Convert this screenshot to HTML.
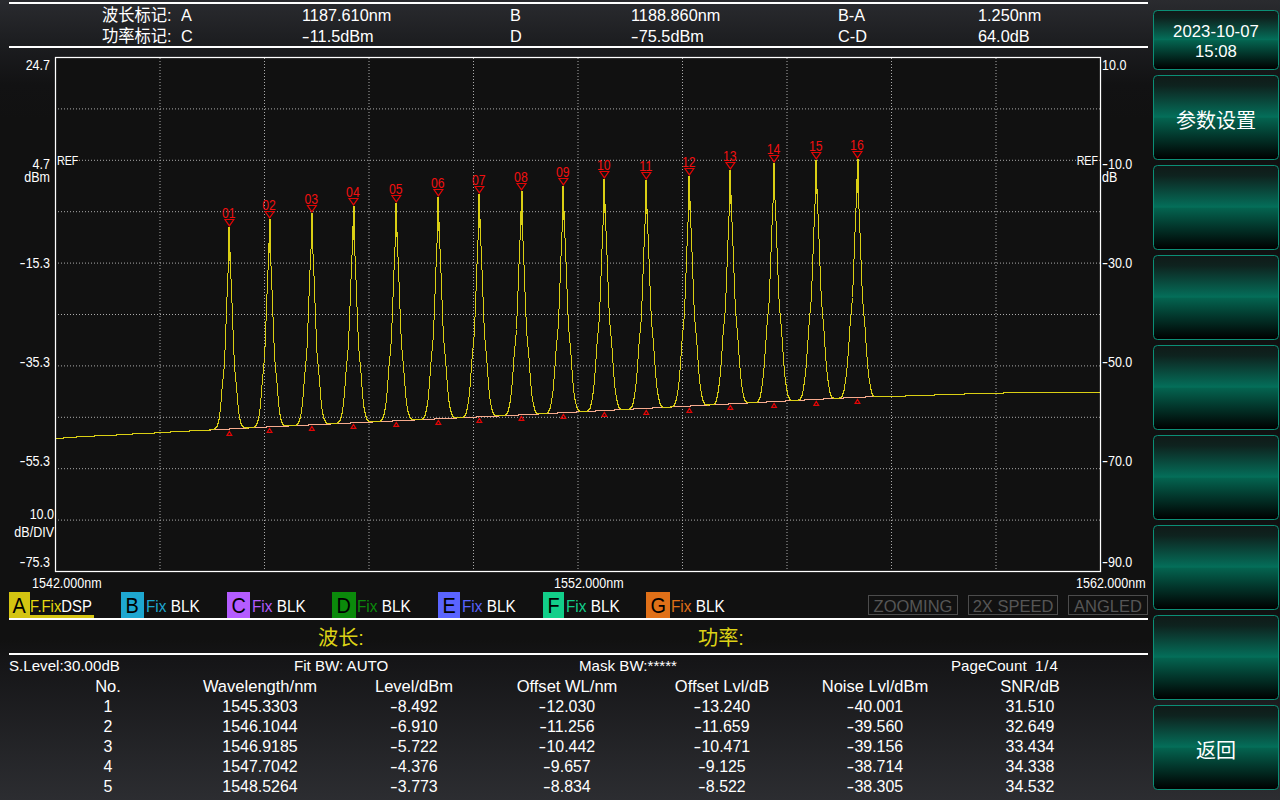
<!DOCTYPE html>
<html lang="zh"><head><meta charset="utf-8"><title>OSA</title>
<style>
*{margin:0;padding:0;box-sizing:border-box}
html,body{width:1280px;height:800px;overflow:hidden;background:#111}
body{position:relative;font-family:"Liberation Sans","Noto Sans CJK SC",sans-serif;color:#fff;font-size:16.8px;
 background:linear-gradient(180deg,#2a2b2f 0px,#1d1e21 40px,#121213 85px,#111111 120px,#111111 640px,#151517 660px,#2c2d31 800px)}
.m{display:inline-block;transform:scaleX(1.45);margin:0 1.2px}
.t{position:absolute;white-space:nowrap;line-height:20px;height:20px;transform:scaleX(.97);transform-origin:left center}
.hl{position:absolute;left:9px;width:1139px;height:2px;background:#fff}
.chart{position:absolute;left:0;top:0;font-family:"Liberation Sans",sans-serif}
.ax{position:absolute;white-space:nowrap;font-size:14.4px;line-height:14px;height:14px;transform:scaleX(.87);transform-origin:left center}
.ax .m{margin:0 1px}
.axl{width:50px;left:0;text-align:right;transform-origin:right center}
.axr{left:1102px}
.ref{font-size:12.4px;transform:scaleX(.86)}
/* side buttons */
.btn{position:absolute;left:1153px;width:126px;height:85px;border:1px solid #0b8f76;border-radius:4.5px;
 background:linear-gradient(180deg,#101a18 0%,#0e231f 12%,#046f5a 49.5%,#04634f 51%,#000 100%);
 display:flex;align-items:center;justify-content:center;text-align:center;font-size:20px;color:#fff;padding-top:3px}
.btn.first{top:10px;height:60px;font-size:17.2px;line-height:20px;padding-top:2px}
.btn.first span{display:block;transform:scaleX(.975)}
/* trace legend */
.bd{position:absolute;top:592px;height:26px;width:22px;color:#000;font-size:21.4px;line-height:28px;text-align:center;overflow:hidden}
.bd span{display:inline-block;transform:scaleX(.93)}
.lg{position:absolute;top:596px;height:20px;line-height:20px;font-size:16.5px;white-space:nowrap;transform:scaleX(.93);transform-origin:left center}
.lg b{font-weight:normal;color:#fff}
.st{position:absolute;top:595px;height:20px;border:1px solid #4c4c4c;color:#565656;font-size:16.5px;line-height:20px;text-align:center}
.s{font-size:14.4px;transform:scaleX(1.05)}
.hd{transform:translateX(-50%) scaleX(.985) !important}
.c{position:absolute;text-align:center;white-space:nowrap;height:20px;line-height:20px;transform:translateX(-50%) scaleX(.95)}
</style></head><body>
<div class="hl" style="top:2px"></div>
<div class="hl" style="top:46px"></div>
<div class="t" style="left:102px;top:6px">波长标记:</div>
<div class="t" style="left:181px;top:6px">A</div>
<div class="t" style="left:302px;top:6px">1187.610nm</div>
<div class="t" style="left:510px;top:6px">B</div>
<div class="t" style="left:631px;top:6px">1188.860nm</div>
<div class="t" style="left:838px;top:6px">B-A</div>
<div class="t" style="left:978px;top:6px">1.250nm</div>
<div class="t" style="left:102px;top:27px">功率标记:</div>
<div class="t" style="left:181px;top:27px">C</div>
<div class="t" style="left:302px;top:27px"><span class="m">-</span>11.5dBm</div>
<div class="t" style="left:510px;top:27px">D</div>
<div class="t" style="left:631px;top:27px"><span class="m">-</span>75.5dBm</div>
<div class="t" style="left:838px;top:27px">C-D</div>
<div class="t" style="left:978px;top:27px">64.0dB</div>
<!--CHART-->
<svg class="chart" width="1160" height="600" viewBox="0 0 1160 600">
<rect x="55" y="57" width="1046" height="515" fill="#111111"/>
<g stroke="#acacac" stroke-width="1" stroke-dasharray="1 2">
<line x1="160.00" y1="58" x2="160.00" y2="571"/>
<line x1="264.50" y1="58" x2="264.50" y2="571"/>
<line x1="369.00" y1="58" x2="369.00" y2="571"/>
<line x1="473.50" y1="58" x2="473.50" y2="571"/>
<line x1="578.00" y1="58" x2="578.00" y2="571"/>
<line x1="682.50" y1="58" x2="682.50" y2="571"/>
<line x1="787.00" y1="58" x2="787.00" y2="571"/>
<line x1="891.50" y1="58" x2="891.50" y2="571"/>
<line x1="996.00" y1="58" x2="996.00" y2="571"/>
<line x1="55" y1="108.90" x2="1100" y2="108.90"/>
<line x1="55" y1="160.30" x2="1100" y2="160.30"/>
<line x1="55" y1="211.70" x2="1100" y2="211.70"/>
<line x1="55" y1="263.10" x2="1100" y2="263.10"/>
<line x1="55" y1="314.50" x2="1100" y2="314.50"/>
<line x1="55" y1="365.90" x2="1100" y2="365.90"/>
<line x1="55" y1="417.30" x2="1100" y2="417.30"/>
<line x1="55" y1="468.70" x2="1100" y2="468.70"/>
<line x1="55" y1="520.10" x2="1100" y2="520.10"/>
</g>
<polyline fill="none" stroke="#f6ab8e" stroke-width="1" shape-rendering="crispEdges" points="210.0,430.5 210.5,429.5 211.0,429.5 211.5,429.5 212.0,429.5 212.5,429.5 213.0,429.5 213.5,429.5 214.0,429.5 214.5,429.5 215.0,429.5 215.5,429.5 216.0,429.5 216.5,429.5 217.0,429.5 217.5,429.5 218.0,429.5 218.5,429.5 219.0,429.5 219.5,429.5 220.0,429.5 220.5,429.5 221.0,429.5 221.5,429.5 222.0,429.5 222.5,429.5 223.0,429.5 223.5,429.5 224.0,429.5 224.5,429.5 225.0,429.5 225.5,429.5 226.0,429.5 226.5,429.5 227.0,429.5 227.5,429.5 228.0,429.5 228.5,429.5 229.0,429.5 229.5,429.5 230.0,428.5 230.5,428.5 231.0,428.5 231.5,428.5 232.0,428.5 232.5,428.5 233.0,428.5 233.5,428.5 234.0,428.5 234.5,428.5 235.0,428.5 235.5,428.5 236.0,428.5 236.5,428.5 237.0,428.5 237.5,428.5 238.0,428.5 238.5,428.5 239.0,428.5 239.5,428.5 240.0,428.5 240.5,428.5 241.0,428.5 241.5,428.5 242.0,428.5 242.5,428.5 243.0,428.5 243.5,428.5 244.0,428.5 244.5,428.5 245.0,428.5 245.5,428.5 246.0,428.5 246.5,428.5 247.0,428.5 247.5,428.5 248.0,428.5 248.5,427.5 249.0,427.5 249.5,427.5 250.0,427.5 250.5,427.5 251.0,427.5 251.5,427.5 252.0,427.5 252.5,427.5 253.0,427.5 253.5,427.5 254.0,427.5 254.5,427.5 255.0,427.5 255.5,427.5 256.0,427.5 256.5,427.5 257.0,427.5 257.5,427.5 258.0,427.5 258.5,427.5 259.0,427.5 259.5,427.5 260.0,427.5 260.5,427.5 261.0,427.5 261.5,427.5 262.0,427.5 262.5,427.5 263.0,427.5 263.5,427.5 264.0,427.5 264.5,427.5 265.0,427.5 265.5,427.5 266.0,427.5 266.5,427.5 267.0,426.5 267.5,426.5 268.0,426.5 268.5,426.5 269.0,426.5 269.5,426.5 270.0,426.5 270.5,426.5 271.0,426.5 271.5,426.5 272.0,426.5 272.5,426.5 273.0,426.5 273.5,426.5 274.0,426.5 274.5,426.5 275.0,426.5 275.5,426.5 276.0,426.5 276.5,426.5 277.0,426.5 277.5,426.5 278.0,426.5 278.5,426.5 279.0,426.5 279.5,426.5 280.0,426.5 280.5,426.5 281.0,426.5 281.5,426.5 282.0,426.5 282.5,426.5 283.0,426.5 283.5,426.5 284.0,426.5 284.5,426.5 285.0,426.5 285.5,426.5 286.0,426.5 286.5,426.5 287.0,426.5 287.5,426.5 288.0,426.5 288.5,425.5 289.0,425.5 289.5,425.5 290.0,425.5 290.5,425.5 291.0,425.5 291.5,425.5 292.0,425.5 292.5,425.5 293.0,425.5 293.5,425.5 294.0,425.5 294.5,425.5 295.0,425.5 295.5,425.5 296.0,425.5 296.5,425.5 297.0,425.5 297.5,425.5 298.0,425.5 298.5,425.5 299.0,425.5 299.5,425.5 300.0,425.5 300.5,425.5 301.0,425.5 301.5,425.5 302.0,425.5 302.5,425.5 303.0,425.5 303.5,425.5 304.0,425.5 304.5,425.5 305.0,425.5 305.5,425.5 306.0,425.5 306.5,425.5 307.0,425.5 307.5,425.5 308.0,425.5 308.5,425.5 309.0,424.5 309.5,424.5 310.0,424.5 310.5,424.5 311.0,424.5 311.5,424.5 312.0,424.5 312.5,424.5 313.0,424.5 313.5,424.5 314.0,424.5 314.5,424.5 315.0,424.5 315.5,424.5 316.0,424.5 316.5,424.5 317.0,424.5 317.5,424.5 318.0,424.5 318.5,424.5 319.0,424.5 319.5,424.5 320.0,424.5 320.5,424.5 321.0,424.5 321.5,424.5 322.0,424.5 322.5,424.5 323.0,424.5 323.5,424.5 324.0,424.5 324.5,424.5 325.0,424.5 325.5,424.5 326.0,424.5 326.5,424.5 327.0,424.5 327.5,424.5 328.0,424.5 328.5,424.5 329.0,424.5 329.5,424.5 330.0,424.5 330.5,423.5 331.0,423.5 331.5,423.5 332.0,423.5 332.5,423.5 333.0,423.5 333.5,423.5 334.0,423.5 334.5,423.5 335.0,423.5 335.5,423.5 336.0,423.5 336.5,423.5 337.0,423.5 337.5,423.5 338.0,423.5 338.5,423.5 339.0,423.5 339.5,423.5 340.0,423.5 340.5,423.5 341.0,423.5 341.5,423.5 342.0,423.5 342.5,423.5 343.0,423.5 343.5,423.5 344.0,423.5 344.5,423.5 345.0,423.5 345.5,423.5 346.0,423.5 346.5,423.5 347.0,423.5 347.5,423.5 348.0,423.5 348.5,423.5 349.0,423.5 349.5,423.5 350.0,423.5 350.5,423.5 351.0,422.5 351.5,422.5 352.0,422.5 352.5,422.5 353.0,422.5 353.5,422.5 354.0,422.5 354.5,422.5 355.0,422.5 355.5,422.5 356.0,422.5 356.5,422.5 357.0,422.5 357.5,422.5 358.0,422.5 358.5,422.5 359.0,422.5 359.5,422.5 360.0,422.5 360.5,422.5 361.0,422.5 361.5,422.5 362.0,422.5 362.5,422.5 363.0,422.5 363.5,422.5 364.0,422.5 364.5,422.5 365.0,422.5 365.5,422.5 366.0,422.5 366.5,422.5 367.0,422.5 367.5,422.5 368.0,422.5 368.5,422.5 369.0,422.5 369.5,422.5 370.0,422.5 370.5,422.5 371.0,422.5 371.5,422.5 372.0,422.5 372.5,421.5 373.0,421.5 373.5,421.5 374.0,421.5 374.5,421.5 375.0,421.5 375.5,421.5 376.0,421.5 376.5,421.5 377.0,421.5 377.5,421.5 378.0,421.5 378.5,421.5 379.0,421.5 379.5,421.5 380.0,421.5 380.5,421.5 381.0,421.5 381.5,421.5 382.0,421.5 382.5,421.5 383.0,421.5 383.5,421.5 384.0,421.5 384.5,421.5 385.0,421.5 385.5,421.5 386.0,421.5 386.5,421.5 387.0,421.5 387.5,421.5 388.0,421.5 388.5,421.5 389.0,421.5 389.5,421.5 390.0,421.5 390.5,421.5 391.0,421.5 391.5,421.5 392.0,421.5 392.5,421.5 393.0,420.5 393.5,420.5 394.0,420.5 394.5,420.5 395.0,420.5 395.5,420.5 396.0,420.5 396.5,420.5 397.0,420.5 397.5,420.5 398.0,420.5 398.5,420.5 399.0,420.5 399.5,420.5 400.0,420.5 400.5,420.5 401.0,420.5 401.5,420.5 402.0,420.5 402.5,420.5 403.0,420.5 403.5,420.5 404.0,420.5 404.5,420.5 405.0,420.5 405.5,420.5 406.0,420.5 406.5,420.5 407.0,420.5 407.5,420.5 408.0,420.5 408.5,420.5 409.0,420.5 409.5,420.5 410.0,420.5 410.5,420.5 411.0,420.5 411.5,420.5 412.0,420.5 412.5,420.5 413.0,420.5 413.5,420.5 414.0,420.5 414.5,419.5 415.0,419.5 415.5,419.5 416.0,419.5 416.5,419.5 417.0,419.5 417.5,419.5 418.0,419.5 418.5,419.5 419.0,419.5 419.5,419.5 420.0,419.5 420.5,419.5 421.0,419.5 421.5,419.5 422.0,419.5 422.5,419.5 423.0,419.5 423.5,419.5 424.0,419.5 424.5,419.5 425.0,419.5 425.5,419.5 426.0,419.5 426.5,419.5 427.0,419.5 427.5,419.5 428.0,419.5 428.5,419.5 429.0,419.5 429.5,419.5 430.0,419.5 430.5,419.5 431.0,419.5 431.5,419.5 432.0,419.5 432.5,419.5 433.0,419.5 433.5,419.5 434.0,419.5 434.5,419.5 435.0,418.5 435.5,418.5 436.0,418.5 436.5,418.5 437.0,418.5 437.5,418.5 438.0,418.5 438.5,418.5 439.0,418.5 439.5,418.5 440.0,418.5 440.5,418.5 441.0,418.5 441.5,418.5 442.0,418.5 442.5,418.5 443.0,418.5 443.5,418.5 444.0,418.5 444.5,418.5 445.0,418.5 445.5,418.5 446.0,418.5 446.5,418.5 447.0,418.5 447.5,418.5 448.0,418.5 448.5,418.5 449.0,418.5 449.5,418.5 450.0,418.5 450.5,418.5 451.0,418.5 451.5,418.5 452.0,418.5 452.5,418.5 453.0,418.5 453.5,418.5 454.0,418.5 454.5,418.5 455.0,418.5 455.5,418.5 456.0,418.5 456.5,417.5 457.0,417.5 457.5,417.5 458.0,417.5 458.5,417.5 459.0,417.5 459.5,417.5 460.0,417.5 460.5,417.5 461.0,417.5 461.5,417.5 462.0,417.5 462.5,417.5 463.0,417.5 463.5,417.5 464.0,417.5 464.5,417.5 465.0,417.5 465.5,417.5 466.0,417.5 466.5,417.5 467.0,417.5 467.5,417.5 468.0,417.5 468.5,417.5 469.0,417.5 469.5,417.5 470.0,417.5 470.5,417.5 471.0,417.5 471.5,417.5 472.0,417.5 472.5,417.5 473.0,417.5 473.5,417.5 474.0,417.5 474.5,417.5 475.0,417.5 475.5,417.5 476.0,417.5 476.5,417.5 477.0,416.5 477.5,416.5 478.0,416.5 478.5,416.5 479.0,416.5 479.5,416.5 480.0,416.5 480.5,416.5 481.0,416.5 481.5,416.5 482.0,416.5 482.5,416.5 483.0,416.5 483.5,416.5 484.0,416.5 484.5,416.5 485.0,416.5 485.5,416.5 486.0,416.5 486.5,416.5 487.0,416.5 487.5,416.5 488.0,416.5 488.5,416.5 489.0,416.5 489.5,416.5 490.0,416.5 490.5,416.5 491.0,416.5 491.5,416.5 492.0,416.5 492.5,416.5 493.0,416.5 493.5,416.5 494.0,416.5 494.5,416.5 495.0,416.5 495.5,416.5 496.0,416.5 496.5,416.5 497.0,416.5 497.5,416.5 498.0,416.5 498.5,415.5 499.0,415.5 499.5,415.5 500.0,415.5 500.5,415.5 501.0,415.5 501.5,415.5 502.0,415.5 502.5,415.5 503.0,415.5 503.5,415.5 504.0,415.5 504.5,415.5 505.0,415.5 505.5,415.5 506.0,415.5 506.5,415.5 507.0,415.5 507.5,415.5 508.0,415.5 508.5,415.5 509.0,415.5 509.5,415.5 510.0,415.5 510.5,415.5 511.0,415.5 511.5,415.5 512.0,415.5 512.5,415.5 513.0,415.5 513.5,415.5 514.0,415.5 514.5,415.5 515.0,415.5 515.5,415.5 516.0,415.5 516.5,415.5 517.0,415.5 517.5,415.5 518.0,415.5 518.5,415.5 519.0,414.5 519.5,414.5 520.0,414.5 520.5,414.5 521.0,414.5 521.5,414.5 522.0,414.5 522.5,414.5 523.0,414.5 523.5,414.5 524.0,414.5 524.5,414.5 525.0,414.5 525.5,414.5 526.0,414.5 526.5,414.5 527.0,414.5 527.5,414.5 528.0,414.5 528.5,414.5 529.0,414.5 529.5,414.5 530.0,414.5 530.5,414.5 531.0,414.5 531.5,414.5 532.0,414.5 532.5,414.5 533.0,414.5 533.5,414.5 534.0,414.5 534.5,414.5 535.0,414.5 535.5,414.5 536.0,414.5 536.5,414.5 537.0,414.5 537.5,414.5 538.0,414.5 538.5,413.5 539.0,413.5 539.5,413.5 540.0,413.5 540.5,413.5 541.0,413.5 541.5,413.5 542.0,413.5 542.5,413.5 543.0,413.5 543.5,413.5 544.0,413.5 544.5,413.5 545.0,413.5 545.5,413.5 546.0,413.5 546.5,413.5 547.0,413.5 547.5,413.5 548.0,413.5 548.5,413.5 549.0,413.5 549.5,413.5 550.0,413.5 550.5,413.5 551.0,413.5 551.5,413.5 552.0,413.5 552.5,413.5 553.0,413.5 553.5,413.5 554.0,413.5 554.5,413.5 555.0,413.5 555.5,413.5 556.0,413.5 556.5,413.5 557.0,413.5 557.5,413.5 558.0,412.5 558.5,412.5 559.0,412.5 559.5,412.5 560.0,412.5 560.5,412.5 561.0,412.5 561.5,412.5 562.0,412.5 562.5,412.5 563.0,412.5 563.5,412.5 564.0,412.5 564.5,412.5 565.0,412.5 565.5,412.5 566.0,412.5 566.5,412.5 567.0,412.5 567.5,412.5 568.0,412.5 568.5,412.5 569.0,412.5 569.5,412.5 570.0,412.5 570.5,412.5 571.0,412.5 571.5,412.5 572.0,412.5 572.5,412.5 573.0,412.5 573.5,412.5 574.0,412.5 574.5,412.5 575.0,412.5 575.5,412.5 576.0,412.5 576.5,411.5 577.0,411.5 577.5,411.5 578.0,411.5 578.5,411.5 579.0,411.5 579.5,411.5 580.0,411.5 580.5,411.5 581.0,411.5 581.5,411.5 582.0,411.5 582.5,411.5 583.0,411.5 583.5,411.5 584.0,411.5 584.5,411.5 585.0,411.5 585.5,411.5 586.0,411.5 586.5,411.5 587.0,411.5 587.5,411.5 588.0,411.5 588.5,411.5 589.0,411.5 589.5,411.5 590.0,411.5 590.5,411.5 591.0,411.5 591.5,411.5 592.0,411.5 592.5,411.5 593.0,411.5 593.5,411.5 594.0,411.5 594.5,411.5 595.0,411.5 595.5,410.5 596.0,410.5 596.5,410.5 597.0,410.5 597.5,410.5 598.0,410.5 598.5,410.5 599.0,410.5 599.5,410.5 600.0,410.5 600.5,410.5 601.0,410.5 601.5,410.5 602.0,410.5 602.5,410.5 603.0,410.5 603.5,410.5 604.0,410.5 604.5,410.5 605.0,410.5 605.5,410.5 606.0,410.5 606.5,410.5 607.0,410.5 607.5,410.5 608.0,410.5 608.5,410.5 609.0,410.5 609.5,410.5 610.0,410.5 610.5,410.5 611.0,410.5 611.5,410.5 612.0,410.5 612.5,410.5 613.0,410.5 613.5,410.5 614.0,410.5 614.5,409.5 615.0,409.5 615.5,409.5 616.0,409.5 616.5,409.5 617.0,409.5 617.5,409.5 618.0,409.5 618.5,409.5 619.0,409.5 619.5,409.5 620.0,409.5 620.5,409.5 621.0,409.5 621.5,409.5 622.0,409.5 622.5,409.5 623.0,409.5 623.5,409.5 624.0,409.5 624.5,409.5 625.0,409.5 625.5,409.5 626.0,409.5 626.5,409.5 627.0,409.5 627.5,409.5 628.0,409.5 628.5,409.5 629.0,409.5 629.5,409.5 630.0,409.5 630.5,409.5 631.0,409.5 631.5,409.5 632.0,409.5 632.5,409.5 633.0,409.5 633.5,408.5 634.0,408.5 634.5,408.5 635.0,408.5 635.5,408.5 636.0,408.5 636.5,408.5 637.0,408.5 637.5,408.5 638.0,408.5 638.5,408.5 639.0,408.5 639.5,408.5 640.0,408.5 640.5,408.5 641.0,408.5 641.5,408.5 642.0,408.5 642.5,408.5 643.0,408.5 643.5,408.5 644.0,408.5 644.5,408.5 645.0,408.5 645.5,408.5 646.0,408.5 646.5,408.5 647.0,408.5 647.5,408.5 648.0,408.5 648.5,408.5 649.0,408.5 649.5,408.5 650.0,408.5 650.5,408.5 651.0,408.5 651.5,408.5 652.0,408.5 652.5,407.5 653.0,407.5 653.5,407.5 654.0,407.5 654.5,407.5 655.0,407.5 655.5,407.5 656.0,407.5 656.5,407.5 657.0,407.5 657.5,407.5 658.0,407.5 658.5,407.5 659.0,407.5 659.5,407.5 660.0,407.5 660.5,407.5 661.0,407.5 661.5,407.5 662.0,407.5 662.5,407.5 663.0,407.5 663.5,407.5 664.0,407.5 664.5,407.5 665.0,407.5 665.5,407.5 666.0,407.5 666.5,407.5 667.0,407.5 667.5,407.5 668.0,407.5 668.5,407.5 669.0,407.5 669.5,407.5 670.0,407.5 670.5,407.5 671.0,407.5 671.5,406.5 672.0,406.5 672.5,406.5 673.0,406.5 673.5,406.5 674.0,406.5 674.5,406.5 675.0,406.5 675.5,406.5 676.0,406.5 676.5,406.5 677.0,406.5 677.5,406.5 678.0,406.5 678.5,406.5 679.0,406.5 679.5,406.5 680.0,406.5 680.5,406.5 681.0,406.5 681.5,406.5 682.0,406.5 682.5,406.5 683.0,406.5 683.5,406.5 684.0,406.5 684.5,406.5 685.0,406.5 685.5,406.5 686.0,406.5 686.5,406.5 687.0,406.5 687.5,406.5 688.0,406.5 688.5,406.5 689.0,406.5 689.5,406.5 690.0,406.5 690.5,405.5 691.0,405.5 691.5,405.5 692.0,405.5 692.5,405.5 693.0,405.5 693.5,405.5 694.0,405.5 694.5,405.5 695.0,405.5 695.5,405.5 696.0,405.5 696.5,405.5 697.0,405.5 697.5,405.5 698.0,405.5 698.5,405.5 699.0,405.5 699.5,405.5 700.0,405.5 700.5,405.5 701.0,405.5 701.5,405.5 702.0,405.5 702.5,405.5 703.0,405.5 703.5,405.5 704.0,405.5 704.5,405.5 705.0,405.5 705.5,405.5 706.0,405.5 706.5,405.5 707.0,405.5 707.5,405.5 708.0,405.5 708.5,405.5 709.0,405.5 709.5,404.5 710.0,404.5 710.5,404.5 711.0,404.5 711.5,404.5 712.0,404.5 712.5,404.5 713.0,404.5 713.5,404.5 714.0,404.5 714.5,404.5 715.0,404.5 715.5,404.5 716.0,404.5 716.5,404.5 717.0,404.5 717.5,404.5 718.0,404.5 718.5,404.5 719.0,404.5 719.5,404.5 720.0,404.5 720.5,404.5 721.0,404.5 721.5,404.5 722.0,404.5 722.5,404.5 723.0,404.5 723.5,404.5 724.0,404.5 724.5,404.5 725.0,404.5 725.5,404.5 726.0,404.5 726.5,404.5 727.0,404.5 727.5,404.5 728.0,404.5 728.5,404.5 729.0,403.5 729.5,403.5 730.0,403.5 730.5,403.5 731.0,403.5 731.5,403.5 732.0,403.5 732.5,403.5 733.0,403.5 733.5,403.5 734.0,403.5 734.5,403.5 735.0,403.5 735.5,403.5 736.0,403.5 736.5,403.5 737.0,403.5 737.5,403.5 738.0,403.5 738.5,403.5 739.0,403.5 739.5,403.5 740.0,403.5 740.5,403.5 741.0,403.5 741.5,403.5 742.0,403.5 742.5,403.5 743.0,403.5 743.5,403.5 744.0,403.5 744.5,403.5 745.0,403.5 745.5,403.5 746.0,403.5 746.5,403.5 747.0,403.5 747.5,403.5 748.0,402.5 748.5,402.5 749.0,402.5 749.5,402.5 750.0,402.5 750.5,402.5 751.0,402.5 751.5,402.5 752.0,402.5 752.5,402.5 753.0,402.5 753.5,402.5 754.0,402.5 754.5,402.5 755.0,402.5 755.5,402.5 756.0,402.5 756.5,402.5 757.0,402.5 757.5,402.5 758.0,402.5 758.5,402.5 759.0,402.5 759.5,402.5 760.0,402.5 760.5,402.5 761.0,402.5 761.5,402.5 762.0,402.5 762.5,402.5 763.0,402.5 763.5,402.5 764.0,402.5 764.5,402.5 765.0,402.5 765.5,402.5 766.0,402.5 766.5,402.5 767.0,401.5 767.5,401.5 768.0,401.5 768.5,401.5 769.0,401.5 769.5,401.5 770.0,401.5 770.5,401.5 771.0,401.5 771.5,401.5 772.0,401.5 772.5,401.5 773.0,401.5 773.5,401.5 774.0,401.5 774.5,401.5 775.0,401.5 775.5,401.5 776.0,401.5 776.5,401.5 777.0,401.5 777.5,401.5 778.0,401.5 778.5,401.5 779.0,401.5 779.5,401.5 780.0,401.5 780.5,401.5 781.0,401.5 781.5,401.5 782.0,401.5 782.5,401.5 783.0,401.5 783.5,401.5 784.0,401.5 784.5,401.5 785.0,401.5 785.5,401.5 786.0,400.5 786.5,400.5 787.0,400.5 787.5,400.5 788.0,400.5 788.5,400.5 789.0,400.5 789.5,400.5 790.0,400.5 790.5,400.5 791.0,400.5 791.5,400.5 792.0,400.5 792.5,400.5 793.0,400.5 793.5,400.5 794.0,400.5 794.5,400.5 795.0,400.5 795.5,400.5 796.0,400.5 796.5,400.5 797.0,400.5 797.5,400.5 798.0,400.5 798.5,400.5 799.0,400.5 799.5,400.5 800.0,400.5 800.5,400.5 801.0,400.5 801.5,400.5 802.0,400.5 802.5,400.5 803.0,400.5 803.5,400.5 804.0,400.5 804.5,400.5 805.0,399.5 805.5,399.5 806.0,399.5 806.5,399.5 807.0,399.5 807.5,399.5 808.0,399.5 808.5,399.5 809.0,399.5 809.5,399.5 810.0,399.5 810.5,399.5 811.0,399.5 811.5,399.5 812.0,399.5 812.5,399.5 813.0,399.5 813.5,399.5 814.0,399.5 814.5,399.5 815.0,399.5 815.5,399.5 816.0,399.5 816.5,399.5 817.0,399.5 817.5,399.5 818.0,399.5 818.5,399.5 819.0,399.5 819.5,399.5 820.0,399.5 820.5,399.5 821.0,399.5 821.5,399.5 822.0,399.5 822.5,399.5 823.0,399.5 823.5,399.5 824.0,398.5 824.5,398.5 825.0,398.5 825.5,398.5 826.0,398.5 826.5,398.5 827.0,398.5 827.5,398.5 828.0,398.5 828.5,398.5 829.0,398.5 829.5,398.5 830.0,398.5 830.5,398.5 831.0,398.5 831.5,398.5 832.0,398.5 832.5,398.5 833.0,398.5 833.5,398.5 834.0,398.5 834.5,398.5 835.0,398.5 835.5,398.5 836.0,398.5 836.5,398.5 837.0,398.5 837.5,398.5 838.0,398.5 838.5,398.5 839.0,398.5 839.5,398.5 840.0,398.5 840.5,398.5 841.0,398.5 841.5,398.5 842.0,398.5 842.5,398.5 843.0,398.5 843.5,397.5 844.0,397.5 844.5,397.5 845.0,397.5 845.5,397.5 846.0,397.5 846.5,397.5 847.0,397.5 847.5,397.5 848.0,397.5 848.5,397.5 849.0,397.5 849.5,397.5 850.0,397.5 850.5,397.5 851.0,397.5 851.5,397.5 852.0,397.5 852.5,397.5 853.0,397.5 853.5,397.5 854.0,397.5 854.5,397.5 855.0,397.5 855.5,397.5 856.0,397.5 856.5,397.5 857.0,397.5 857.5,397.5 858.0,397.5 858.5,397.5 859.0,397.5 859.5,397.5 860.0,397.5 860.5,397.5 861.0,397.5 861.5,397.5 862.0,397.5 862.5,397.5 863.0,397.5 863.5,397.5 864.0,397.5 864.5,397.5 865.0,397.5 865.5,397.5 866.0,396.5 866.5,396.5 867.0,396.5 867.5,396.5 868.0,396.5 868.5,396.5 869.0,396.5 869.5,396.5 870.0,396.5 870.5,396.5 871.0,396.5 871.5,396.5 872.0,396.5 872.5,396.5 873.0,396.5 873.5,396.5 874.0,396.5 874.5,396.5 875.0,396.5 875.5,396.5 876.0,396.5"/>
<polyline fill="none" stroke="#dacf14" stroke-width="1" stroke-linejoin="round" shape-rendering="crispEdges" points="55.00,438.5 55.25,438.5 55.50,438.5 55.75,438.5 56.00,438.5 56.25,438.5 56.50,438.5 56.75,438.5 57.00,438.5 57.25,438.5 57.50,438.5 57.75,438.5 58.00,438.5 58.25,438.5 58.50,438.5 58.75,438.5 59.00,438.5 59.25,438.5 59.50,438.5 59.75,438.5 60.00,438.5 60.25,438.5 60.50,438.5 60.75,438.5 61.00,438.5 61.25,438.5 61.50,438.5 61.75,438.5 62.00,438.5 62.25,438.5 62.50,438.5 62.75,438.5 63.00,438.5 63.25,437.5 63.50,437.5 63.75,437.5 64.00,437.5 64.25,437.5 64.50,437.5 64.75,437.5 65.00,437.5 65.25,437.5 65.50,437.5 65.75,437.5 66.00,437.5 66.25,437.5 66.50,437.5 66.75,437.5 67.00,437.5 67.25,437.5 67.50,437.5 67.75,437.5 68.00,437.5 68.25,437.5 68.50,437.5 68.75,437.5 69.00,437.5 69.25,437.5 69.50,437.5 69.75,437.5 70.00,437.5 70.25,437.5 70.50,437.5 70.75,437.5 71.00,437.5 71.25,437.5 71.50,437.5 71.75,437.5 72.00,437.5 72.25,437.5 72.50,437.5 72.75,437.5 73.00,437.5 73.25,437.5 73.50,437.5 73.75,437.5 74.00,437.5 74.25,437.5 74.50,437.5 74.75,437.5 75.00,437.5 75.25,437.5 75.50,437.5 75.75,437.5 76.00,437.5 76.25,437.5 76.50,437.5 76.75,437.5 77.00,436.5 77.25,436.5 77.50,436.5 77.75,436.5 78.00,436.5 78.25,436.5 78.50,436.5 78.75,436.5 79.00,436.5 79.25,436.5 79.50,436.5 79.75,436.5 80.00,436.5 80.25,436.5 80.50,436.5 80.75,436.5 81.00,436.5 81.25,436.5 81.50,436.5 81.75,436.5 82.00,436.5 82.25,436.5 82.50,436.5 82.75,436.5 83.00,436.5 83.25,436.5 83.50,436.5 83.75,436.5 84.00,436.5 84.25,436.5 84.50,436.5 84.75,436.5 85.00,436.5 85.25,436.5 85.50,436.5 85.75,436.5 86.00,436.5 86.25,436.5 86.50,436.5 86.75,436.5 87.00,436.5 87.25,436.5 87.50,436.5 87.75,436.5 88.00,436.5 88.25,436.5 88.50,436.5 88.75,436.5 89.00,436.5 89.25,436.5 89.50,436.5 89.75,436.5 90.00,436.5 90.25,436.5 90.50,436.5 90.75,436.5 91.00,436.5 91.25,436.5 91.50,436.5 91.75,436.5 92.00,436.5 92.25,436.5 92.50,436.5 92.75,436.5 93.00,436.5 93.25,436.5 93.50,436.5 93.75,436.5 94.00,436.5 94.25,436.5 94.50,436.5 94.75,436.5 95.00,435.5 95.25,435.5 95.50,435.5 95.75,435.5 96.00,435.5 96.25,435.5 96.50,435.5 96.75,435.5 97.00,435.5 97.25,435.5 97.50,435.5 97.75,435.5 98.00,435.5 98.25,435.5 98.50,435.5 98.75,435.5 99.00,435.5 99.25,435.5 99.50,435.5 99.75,435.5 100.00,435.5 100.25,435.5 100.50,435.5 100.75,435.5 101.00,435.5 101.25,435.5 101.50,435.5 101.75,435.5 102.00,435.5 102.25,435.5 102.50,435.5 102.75,435.5 103.00,435.5 103.25,435.5 103.50,435.5 103.75,435.5 104.00,435.5 104.25,435.5 104.50,435.5 104.75,435.5 105.00,435.5 105.25,435.5 105.50,435.5 105.75,435.5 106.00,435.5 106.25,435.5 106.50,435.5 106.75,435.5 107.00,435.5 107.25,435.5 107.50,435.5 107.75,435.5 108.00,435.5 108.25,435.5 108.50,435.5 108.75,435.5 109.00,435.5 109.25,435.5 109.50,435.5 109.75,435.5 110.00,435.5 110.25,435.5 110.50,435.5 110.75,435.5 111.00,435.5 111.25,435.5 111.50,435.5 111.75,435.5 112.00,435.5 112.25,435.5 112.50,435.5 112.75,435.5 113.00,435.5 113.25,435.5 113.50,435.5 113.75,435.5 114.00,435.5 114.25,435.5 114.50,435.5 114.75,435.5 115.00,435.5 115.25,435.5 115.50,435.5 115.75,435.5 116.00,435.5 116.25,435.5 116.50,435.5 116.75,435.5 117.00,434.5 117.25,434.5 117.50,434.5 117.75,434.5 118.00,434.5 118.25,434.5 118.50,434.5 118.75,434.5 119.00,434.5 119.25,434.5 119.50,434.5 119.75,434.5 120.00,434.5 120.25,434.5 120.50,434.5 120.75,434.5 121.00,434.5 121.25,434.5 121.50,434.5 121.75,434.5 122.00,434.5 122.25,434.5 122.50,434.5 122.75,434.5 123.00,434.5 123.25,434.5 123.50,434.5 123.75,434.5 124.00,434.5 124.25,434.5 124.50,434.5 124.75,434.5 125.00,434.5 125.25,434.5 125.50,434.5 125.75,434.5 126.00,434.5 126.25,434.5 126.50,434.5 126.75,434.5 127.00,434.5 127.25,434.5 127.50,434.5 127.75,434.5 128.00,434.5 128.25,434.5 128.50,434.5 128.75,434.5 129.00,434.5 129.25,434.5 129.50,434.5 129.75,434.5 130.00,434.5 130.25,434.5 130.50,434.5 130.75,434.5 131.00,434.5 131.25,434.5 131.50,434.5 131.75,434.5 132.00,434.5 132.25,433.5 132.50,433.5 132.75,433.5 133.00,433.5 133.25,433.5 133.50,433.5 133.75,433.5 134.00,433.5 134.25,433.5 134.50,433.5 134.75,433.5 135.00,433.5 135.25,433.5 135.50,433.5 135.75,433.5 136.00,433.5 136.25,433.5 136.50,433.5 136.75,433.5 137.00,433.5 137.25,433.5 137.50,433.5 137.75,433.5 138.00,433.5 138.25,433.5 138.50,433.5 138.75,433.5 139.00,433.5 139.25,433.5 139.50,433.5 139.75,433.5 140.00,433.5 140.25,433.5 140.50,433.5 140.75,433.5 141.00,433.5 141.25,433.5 141.50,433.5 141.75,433.5 142.00,433.5 142.25,433.5 142.50,433.5 142.75,433.5 143.00,433.5 143.25,433.5 143.50,433.5 143.75,433.5 144.00,433.5 144.25,433.5 144.50,433.5 144.75,433.5 145.00,433.5 145.25,433.5 145.50,433.5 145.75,433.5 146.00,433.5 146.25,433.5 146.50,433.5 146.75,433.5 147.00,433.5 147.25,433.5 147.50,433.5 147.75,433.5 148.00,433.5 148.25,433.5 148.50,433.5 148.75,433.5 149.00,433.5 149.25,433.5 149.50,433.5 149.75,433.5 150.00,433.5 150.25,433.5 150.50,433.5 150.75,433.5 151.00,433.5 151.25,433.5 151.50,433.5 151.75,433.5 152.00,433.5 152.25,433.5 152.50,433.5 152.75,433.5 153.00,433.5 153.25,433.5 153.50,433.5 153.75,433.5 154.00,433.5 154.25,433.5 154.50,433.5 154.75,433.5 155.00,432.5 155.25,432.5 155.50,432.5 155.75,432.5 156.00,432.5 156.25,432.5 156.50,432.5 156.75,432.5 157.00,432.5 157.25,432.5 157.50,432.5 157.75,432.5 158.00,432.5 158.25,432.5 158.50,432.5 158.75,432.5 159.00,432.5 159.25,432.5 159.50,432.5 159.75,432.5 160.00,432.5 160.25,432.5 160.50,432.5 160.75,432.5 161.00,432.5 161.25,432.5 161.50,432.5 161.75,432.5 162.00,432.5 162.25,432.5 162.50,432.5 162.75,432.5 163.00,432.5 163.25,432.5 163.50,432.5 163.75,432.5 164.00,432.5 164.25,432.5 164.50,432.5 164.75,432.5 165.00,432.5 165.25,432.5 165.50,432.5 165.75,432.5 166.00,432.5 166.25,432.5 166.50,432.5 166.75,432.5 167.00,432.5 167.25,432.5 167.50,432.5 167.75,432.5 168.00,432.5 168.25,432.5 168.50,432.5 168.75,432.5 169.00,432.5 169.25,432.5 169.50,432.5 169.75,432.5 170.00,432.5 170.25,431.5 170.50,431.5 170.75,431.5 171.00,431.5 171.25,431.5 171.50,431.5 171.75,431.5 172.00,431.5 172.25,431.5 172.50,431.5 172.75,431.5 173.00,431.5 173.25,431.5 173.50,431.5 173.75,431.5 174.00,431.5 174.25,431.5 174.50,431.5 174.75,431.5 175.00,431.5 175.25,431.5 175.50,431.5 175.75,431.5 176.00,431.5 176.25,431.5 176.50,431.5 176.75,431.5 177.00,431.5 177.25,431.5 177.50,431.5 177.75,431.5 178.00,431.5 178.25,431.5 178.50,431.5 178.75,431.5 179.00,431.5 179.25,431.5 179.50,431.5 179.75,431.5 180.00,431.5 180.25,431.5 180.50,431.5 180.75,431.5 181.00,431.5 181.25,431.5 181.50,431.5 181.75,431.5 182.00,431.5 182.25,431.5 182.50,431.5 182.75,431.5 183.00,431.5 183.25,431.5 183.50,431.5 183.75,431.5 184.00,431.5 184.25,431.5 184.50,431.5 184.75,431.5 185.00,431.5 185.25,431.5 185.50,431.5 185.75,431.5 186.00,431.5 186.25,431.5 186.50,431.5 186.75,431.5 187.00,431.5 187.25,431.5 187.50,431.5 187.75,431.5 188.00,431.5 188.25,431.5 188.50,431.5 188.75,431.5 189.00,431.5 189.25,431.5 189.50,431.5 189.75,431.5 190.00,430.5 190.25,430.5 190.50,430.5 190.75,430.5 191.00,430.5 191.25,430.5 191.50,430.5 191.75,430.5 192.00,430.5 192.25,430.5 192.50,430.5 192.75,430.5 193.00,430.5 193.25,430.5 193.50,430.5 193.75,430.5 194.00,430.5 194.25,430.5 194.50,430.5 194.75,430.5 195.00,430.5 195.25,430.5 195.50,430.5 195.75,430.5 196.00,430.5 196.25,430.5 196.50,430.5 196.75,430.5 197.00,430.5 197.25,430.5 197.50,430.5 197.75,430.5 198.00,430.5 198.25,430.5 198.50,430.5 198.75,430.5 199.00,430.5 199.25,430.5 199.50,430.5 199.75,430.5 200.00,430.5 200.25,430.5 200.50,430.5 200.75,430.5 201.00,430.5 201.25,430.5 201.50,430.5 201.75,430.5 202.00,430.5 202.25,430.5 202.50,430.5 202.75,430.5 203.00,430.5 203.25,430.5 203.50,430.5 203.75,430.5 204.00,430.5 204.25,430.5 204.50,430.5 204.75,430.5 205.00,430.5 205.25,430.5 205.50,430.5 205.75,430.5 206.00,430.5 206.25,430.5 206.50,430.5 206.75,430.5 207.00,430.5 207.25,430.5 207.50,430.5 207.75,430.5 208.00,430.5 208.25,430.5 208.50,430.5 208.75,430.5 209.00,430.5 209.25,430.5 209.50,430.5 209.75,430.5 210.00,429.5 210.25,429.5 210.50,429.5 210.75,429.5 211.00,429.5 211.25,429.5 211.50,429.5 211.75,429.5 212.00,429.5 212.25,429.5 212.50,429.5 212.75,429.5 213.00,429.5 213.25,429.5 213.50,429.5 213.75,429.5 214.00,429.5 214.25,429.5 214.50,429.5 214.75,428.5 215.00,428.5 215.25,428.5 215.50,428.5 215.75,428.5 216.00,427.5 216.25,427.5 216.50,427.5 216.75,426.5 217.00,426.5 217.25,425.5 217.50,424.5 217.75,424.5 218.00,423.5 218.25,422.5 218.50,421.5 218.75,420.5 219.00,419.5 219.25,418.5 219.50,416.5 219.75,414.5 220.00,412.5 220.25,410.5 220.50,407.5 220.75,405.5 221.00,402.5 221.25,399.5 221.50,396.5 221.75,393.5 222.00,389.5 222.25,387.5 222.50,384.5 222.75,382.5 223.00,379.5 223.25,377.5 223.50,374.5 223.75,371.5 224.00,369.5 224.25,366.5 224.50,361.5 224.75,356.5 225.00,350.5 225.25,344.5 225.50,337.5 225.75,331.5 226.00,324.5 226.25,317.5 226.50,310.5 226.75,304.5 227.00,297.5 227.25,290.5 227.50,284.5 227.75,279.5 228.00,273.5 228.25,268.5 228.50,263.5 228.75,253.5 229.00,243.5 229.25,233.5 229.40,227.5 229.50,231.5 229.75,241.5 230.00,251.5 230.25,261.5 230.50,267.5 230.75,272.5 231.00,278.5 231.25,283.5 231.50,289.5 231.75,296.5 232.00,302.5 232.25,309.5 232.50,316.5 232.75,323.5 233.00,329.5 233.25,336.5 233.50,342.5 233.75,348.5 234.00,354.5 234.25,360.5 234.50,365.5 234.75,368.5 235.00,371.5 235.25,374.5 235.50,376.5 235.75,379.5 236.00,381.5 236.25,384.5 236.50,386.5 236.75,389.5 237.00,392.5 237.25,395.5 237.50,398.5 237.75,401.5 238.00,404.5 238.25,407.5 238.50,409.5 238.75,411.5 239.00,413.5 239.25,415.5 239.50,417.5 239.75,418.5 240.00,419.5 240.25,420.5 240.50,421.5 240.75,422.5 241.00,423.5 241.25,423.5 241.50,424.5 241.75,424.5 242.00,425.5 242.25,425.5 242.50,426.5 242.75,426.5 243.00,426.5 243.25,427.5 243.50,427.5 243.75,427.5 244.00,427.5 244.25,427.5 244.50,427.5 244.75,427.5 245.00,427.5 245.25,427.5 245.50,427.5 245.75,427.5 246.00,427.5 246.25,428.5 246.50,428.5 246.75,428.5 247.00,428.5 247.25,428.5 247.50,427.5 247.75,427.5 248.00,427.5 248.25,427.5 248.50,427.5 248.75,427.5 249.00,427.5 249.25,427.5 249.50,427.5 249.75,427.5 250.00,427.5 250.25,427.5 250.50,427.5 250.75,427.5 251.00,427.5 251.25,427.5 251.50,427.5 251.75,427.5 252.00,427.5 252.25,427.5 252.50,427.5 252.75,427.5 253.00,427.5 253.25,427.5 253.50,427.5 253.75,427.5 254.00,427.5 254.25,427.5 254.50,426.5 254.75,426.5 255.00,426.5 255.25,426.5 255.50,426.5 255.75,425.5 256.00,425.5 256.25,425.5 256.50,424.5 256.75,424.5 257.00,423.5 257.25,422.5 257.50,422.5 257.75,421.5 258.00,420.5 258.25,419.5 258.50,418.5 258.75,417.5 259.00,416.5 259.25,414.5 259.50,413.5 259.75,411.5 260.00,409.5 260.25,406.5 260.50,404.5 260.75,401.5 261.00,398.5 261.25,395.5 261.50,392.5 261.75,388.5 262.00,385.5 262.25,382.5 262.50,379.5 262.75,377.5 263.00,374.5 263.25,371.5 263.50,369.5 263.75,366.5 264.00,363.5 264.25,361.5 264.50,358.5 264.75,353.5 265.00,347.5 265.25,340.5 265.50,334.5 265.75,328.5 266.00,321.5 266.25,315.5 266.50,308.5 266.75,301.5 267.00,294.5 267.25,288.5 267.50,281.5 267.75,275.5 268.00,270.5 268.25,264.5 268.50,259.5 268.75,253.5 269.00,243.5 269.25,233.5 269.50,223.5 269.60,219.5 269.75,225.5 270.00,235.5 270.25,245.5 270.50,255.5 270.75,260.5 271.00,265.5 271.25,271.5 271.50,276.5 271.75,282.5 272.00,289.5 272.25,296.5 272.50,302.5 272.75,309.5 273.00,316.5 273.25,323.5 273.50,329.5 273.75,336.5 274.00,342.5 274.25,348.5 274.50,354.5 274.75,358.5 275.00,361.5 275.25,364.5 275.50,367.5 275.75,369.5 276.00,372.5 276.25,375.5 276.50,377.5 276.75,380.5 277.00,382.5 277.25,386.5 277.50,389.5 277.75,392.5 278.00,395.5 278.25,398.5 278.50,401.5 278.75,404.5 279.00,406.5 279.25,409.5 279.50,411.5 279.75,413.5 280.00,414.5 280.25,415.5 280.50,417.5 280.75,418.5 281.00,419.5 281.25,419.5 281.50,420.5 281.75,421.5 282.00,422.5 282.25,422.5 282.50,423.5 282.75,423.5 283.00,424.5 283.25,424.5 283.50,424.5 283.75,424.5 284.00,425.5 284.25,425.5 284.50,425.5 284.75,425.5 285.00,425.5 285.25,425.5 285.50,425.5 285.75,425.5 286.00,425.5 286.25,425.5 286.50,425.5 286.75,425.5 287.00,425.5 287.25,425.5 287.50,425.5 287.75,425.5 288.00,425.5 288.25,425.5 288.50,425.5 288.75,425.5 289.00,425.5 289.25,425.5 289.50,425.5 289.75,425.5 290.00,425.5 290.25,425.5 290.50,425.5 290.75,425.5 291.00,425.5 291.25,425.5 291.50,425.5 291.75,425.5 292.00,425.5 292.25,425.5 292.50,425.5 292.75,425.5 293.00,425.5 293.25,425.5 293.50,425.5 293.75,425.5 294.00,425.5 294.25,425.5 294.50,425.5 294.75,425.5 295.00,425.5 295.25,425.5 295.50,425.5 295.75,425.5 296.00,425.5 296.25,425.5 296.50,424.5 296.75,424.5 297.00,424.5 297.25,424.5 297.50,424.5 297.75,423.5 298.00,423.5 298.25,423.5 298.50,422.5 298.75,422.5 299.00,421.5 299.25,420.5 299.50,420.5 299.75,419.5 300.00,418.5 300.25,417.5 300.50,416.5 300.75,415.5 301.00,414.5 301.25,412.5 301.50,411.5 301.75,409.5 302.00,407.5 302.25,405.5 302.50,402.5 302.75,399.5 303.00,397.5 303.25,394.5 303.50,390.5 303.75,387.5 304.00,384.5 304.25,380.5 304.50,377.5 304.75,374.5 305.00,372.5 305.25,369.5 305.50,366.5 305.75,364.5 306.00,361.5 306.25,358.5 306.50,355.5 306.75,353.5 307.00,348.5 307.25,342.5 307.50,336.5 307.75,330.5 308.00,323.5 308.25,317.5 308.50,310.5 308.75,303.5 309.00,296.5 309.25,290.5 309.50,283.5 309.75,276.5 310.00,270.5 310.25,265.5 310.50,259.5 310.75,254.5 311.00,249.5 311.25,239.5 311.50,229.5 311.75,219.5 311.90,213.5 312.00,217.5 312.25,227.5 312.50,237.5 312.75,247.5 313.00,253.5 313.25,258.5 313.50,264.5 313.75,269.5 314.00,275.5 314.25,282.5 314.50,288.5 314.75,295.5 315.00,302.5 315.25,309.5 315.50,315.5 315.75,322.5 316.00,328.5 316.25,335.5 316.50,341.5 316.75,347.5 317.00,352.5 317.25,355.5 317.50,358.5 317.75,360.5 318.00,363.5 318.25,366.5 318.50,368.5 318.75,371.5 319.00,374.5 319.25,376.5 319.50,380.5 319.75,383.5 320.00,386.5 320.25,390.5 320.50,393.5 320.75,396.5 321.00,399.5 321.25,401.5 321.50,404.5 321.75,406.5 322.00,408.5 322.25,410.5 322.50,411.5 322.75,413.5 323.00,414.5 323.25,415.5 323.50,416.5 323.75,417.5 324.00,418.5 324.25,419.5 324.50,419.5 324.75,420.5 325.00,420.5 325.25,421.5 325.50,421.5 325.75,422.5 326.00,422.5 326.25,422.5 326.50,423.5 326.75,423.5 327.00,423.5 327.25,423.5 327.50,423.5 327.75,423.5 328.00,423.5 328.25,423.5 328.50,423.5 328.75,423.5 329.00,423.5 329.25,423.5 329.50,423.5 329.75,423.5 330.00,423.5 330.25,423.5 330.50,423.5 330.75,423.5 331.00,423.5 331.25,423.5 331.50,423.5 331.75,423.5 332.00,423.5 332.25,423.5 332.50,423.5 332.75,423.5 333.00,423.5 333.25,423.5 333.50,423.5 333.75,423.5 334.00,423.5 334.25,423.5 334.50,423.5 334.75,423.5 335.00,423.5 335.25,423.5 335.50,423.5 335.75,423.5 336.00,423.5 336.25,423.5 336.50,423.5 336.75,423.5 337.00,423.5 337.25,423.5 337.50,423.5 337.75,423.5 338.00,422.5 338.25,422.5 338.50,422.5 338.75,422.5 339.00,421.5 339.25,421.5 339.50,421.5 339.75,420.5 340.00,420.5 340.25,419.5 340.50,419.5 340.75,418.5 341.00,417.5 341.25,416.5 341.50,415.5 341.75,414.5 342.00,413.5 342.25,412.5 342.50,410.5 342.75,409.5 343.00,407.5 343.25,405.5 343.50,403.5 343.75,401.5 344.00,398.5 344.25,395.5 344.50,392.5 344.75,389.5 345.00,386.5 345.25,382.5 345.50,379.5 345.75,375.5 346.00,372.5 346.25,369.5 346.50,366.5 346.75,363.5 347.00,361.5 347.25,358.5 347.50,355.5 347.75,352.5 348.00,350.5 348.25,347.5 348.50,343.5 348.75,337.5 349.00,331.5 349.25,325.5 349.50,319.5 349.75,312.5 350.00,306.5 350.25,299.5 350.50,292.5 350.75,285.5 351.00,279.5 351.25,272.5 351.50,265.5 351.75,260.5 352.00,255.5 352.25,249.5 352.50,244.5 352.75,236.5 353.00,226.5 353.25,216.5 353.50,206.5 353.50,206.5 353.75,216.5 354.00,226.5 354.25,236.5 354.50,244.5 354.75,249.5 355.00,255.5 355.25,260.5 355.50,265.5 355.75,272.5 356.00,279.5 356.25,285.5 356.50,292.5 356.75,299.5 357.00,306.5 357.25,312.5 357.50,319.5 357.75,325.5 358.00,331.5 358.25,337.5 358.50,343.5 358.75,347.5 359.00,350.5 359.25,352.5 359.50,355.5 359.75,358.5 360.00,361.5 360.25,363.5 360.50,366.5 360.75,369.5 361.00,372.5 361.25,375.5 361.50,379.5 361.75,382.5 362.00,386.5 362.25,389.5 362.50,392.5 362.75,395.5 363.00,398.5 363.25,400.5 363.50,403.5 363.75,405.5 364.00,407.5 364.25,408.5 364.50,410.5 364.75,411.5 365.00,412.5 365.25,413.5 365.50,414.5 365.75,415.5 366.00,416.5 366.25,417.5 366.50,418.5 366.75,418.5 367.00,419.5 367.25,419.5 367.50,420.5 367.75,420.5 368.00,420.5 368.25,420.5 368.50,421.5 368.75,421.5 369.00,421.5 369.25,421.5 369.50,421.5 369.75,421.5 370.00,421.5 370.25,421.5 370.50,421.5 370.75,421.5 371.00,421.5 371.25,421.5 371.50,421.5 371.75,421.5 372.00,421.5 372.25,421.5 372.50,421.5 372.75,421.5 373.00,421.5 373.25,421.5 373.50,421.5 373.75,421.5 374.00,421.5 374.25,421.5 374.50,421.5 374.75,421.5 375.00,421.5 375.25,421.5 375.50,421.5 375.75,421.5 376.00,421.5 376.25,421.5 376.50,421.5 376.75,421.5 377.00,421.5 377.25,421.5 377.50,421.5 377.75,421.5 378.00,421.5 378.25,421.5 378.50,421.5 378.75,421.5 379.00,421.5 379.25,421.5 379.50,421.5 379.75,421.5 380.00,421.5 380.25,421.5 380.50,421.5 380.75,420.5 381.00,420.5 381.25,420.5 381.50,420.5 381.75,419.5 382.00,419.5 382.25,419.5 382.50,418.5 382.75,418.5 383.00,417.5 383.25,416.5 383.50,416.5 383.75,415.5 384.00,414.5 384.25,413.5 384.50,412.5 384.75,411.5 385.00,409.5 385.25,408.5 385.50,407.5 385.75,405.5 386.00,403.5 386.25,401.5 386.50,399.5 386.75,396.5 387.00,393.5 387.25,390.5 387.50,387.5 387.75,384.5 388.00,380.5 388.25,377.5 388.50,373.5 388.75,370.5 389.00,366.5 389.25,364.5 389.50,361.5 389.75,358.5 390.00,356.5 390.25,353.5 390.50,350.5 390.75,347.5 391.00,344.5 391.25,342.5 391.50,336.5 391.75,330.5 392.00,323.5 392.25,317.5 392.50,311.5 392.75,304.5 393.00,297.5 393.25,291.5 393.50,284.5 393.75,277.5 394.00,270.5 394.25,263.5 394.50,258.5 394.75,253.5 395.00,247.5 395.25,242.5 395.50,235.5 395.75,225.5 396.00,215.5 396.25,205.5 396.30,203.5 396.50,211.5 396.75,221.5 397.00,231.5 397.25,240.5 397.50,245.5 397.75,251.5 398.00,256.5 398.25,261.5 398.50,268.5 398.75,274.5 399.00,281.5 399.25,288.5 399.50,295.5 399.75,301.5 400.00,308.5 400.25,315.5 400.50,321.5 400.75,327.5 401.00,333.5 401.25,339.5 401.50,343.5 401.75,346.5 402.00,349.5 402.25,352.5 402.50,354.5 402.75,357.5 403.00,360.5 403.25,363.5 403.50,365.5 403.75,368.5 404.00,372.5 404.25,375.5 404.50,379.5 404.75,382.5 405.00,385.5 405.25,389.5 405.50,392.5 405.75,394.5 406.00,397.5 406.25,400.5 406.50,402.5 406.75,404.5 407.00,405.5 407.25,407.5 407.50,408.5 407.75,410.5 408.00,411.5 408.25,412.5 408.50,413.5 408.75,414.5 409.00,414.5 409.25,415.5 409.50,416.5 409.75,416.5 410.00,417.5 410.25,417.5 410.50,418.5 410.75,418.5 411.00,418.5 411.25,418.5 411.50,419.5 411.75,419.5 412.00,419.5 412.25,419.5 412.50,419.5 412.75,419.5 413.00,419.5 413.25,419.5 413.50,419.5 413.75,419.5 414.00,419.5 414.25,419.5 414.50,419.5 414.75,419.5 415.00,419.5 415.25,419.5 415.50,419.5 415.75,419.5 416.00,419.5 416.25,419.5 416.50,419.5 416.75,419.5 417.00,419.5 417.25,419.5 417.50,419.5 417.75,419.5 418.00,419.5 418.25,419.5 418.50,419.5 418.75,419.5 419.00,419.5 419.25,419.5 419.50,419.5 419.75,419.5 420.00,419.5 420.25,419.5 420.50,419.5 420.75,419.5 421.00,419.5 421.25,419.5 421.50,419.5 421.75,419.5 422.00,419.5 422.25,419.5 422.50,418.5 422.75,418.5 423.00,418.5 423.25,418.5 423.50,418.5 423.75,417.5 424.00,417.5 424.25,416.5 424.50,416.5 424.75,415.5 425.00,415.5 425.25,414.5 425.50,413.5 425.75,412.5 426.00,411.5 426.25,410.5 426.50,409.5 426.75,408.5 427.00,406.5 427.25,405.5 427.50,403.5 427.75,402.5 428.00,400.5 428.25,398.5 428.50,395.5 428.75,392.5 429.00,389.5 429.25,386.5 429.50,383.5 429.75,380.5 430.00,376.5 430.25,373.5 430.50,369.5 430.75,365.5 431.00,362.5 431.25,359.5 431.50,356.5 431.75,354.5 432.00,351.5 432.25,348.5 432.50,345.5 432.75,342.5 433.00,340.5 433.25,337.5 433.50,332.5 433.75,326.5 434.00,320.5 434.25,314.5 434.50,308.5 434.75,301.5 435.00,294.5 435.25,287.5 435.50,280.5 435.75,274.5 436.00,267.5 436.25,260.5 436.50,254.5 436.75,249.5 437.00,243.5 437.25,238.5 437.50,233.5 437.75,223.5 438.00,213.5 438.25,203.5 438.40,197.5 438.50,201.5 438.75,211.5 439.00,221.5 439.25,231.5 439.50,237.5 439.75,242.5 440.00,248.5 440.25,253.5 440.50,259.5 440.75,266.5 441.00,272.5 441.25,279.5 441.50,286.5 441.75,293.5 442.00,299.5 442.25,306.5 442.50,313.5 442.75,319.5 443.00,325.5 443.25,331.5 443.50,336.5 443.75,339.5 444.00,342.5 444.25,345.5 444.50,347.5 444.75,350.5 445.00,353.5 445.25,356.5 445.50,358.5 445.75,361.5 446.00,365.5 446.25,368.5 446.50,372.5 446.75,375.5 447.00,379.5 447.25,382.5 447.50,385.5 447.75,388.5 448.00,391.5 448.25,394.5 448.50,397.5 448.75,399.5 449.00,401.5 449.25,402.5 449.50,404.5 449.75,405.5 450.00,407.5 450.25,408.5 450.50,409.5 450.75,410.5 451.00,411.5 451.25,412.5 451.50,413.5 451.75,414.5 452.00,414.5 452.25,415.5 452.50,415.5 452.75,416.5 453.00,416.5 453.25,416.5 453.50,416.5 453.75,417.5 454.00,417.5 454.25,417.5 454.50,417.5 454.75,417.5 455.00,417.5 455.25,417.5 455.50,417.5 455.75,417.5 456.00,417.5 456.25,417.5 456.50,417.5 456.75,417.5 457.00,417.5 457.25,417.5 457.50,417.5 457.75,417.5 458.00,417.5 458.25,417.5 458.50,417.5 458.75,417.5 459.00,417.5 459.25,417.5 459.50,417.5 459.75,417.5 460.00,417.5 460.25,417.5 460.50,417.5 460.75,417.5 461.00,417.5 461.25,417.5 461.50,417.5 461.75,417.5 462.00,417.5 462.25,417.5 462.50,417.5 462.75,417.5 463.00,417.5 463.25,417.5 463.50,417.5 463.75,416.5 464.00,416.5 464.25,416.5 464.50,415.5 464.75,415.5 465.00,415.5 465.25,414.5 465.50,414.5 465.75,413.5 466.00,413.5 466.25,412.5 466.50,411.5 466.75,410.5 467.00,409.5 467.25,408.5 467.50,407.5 467.75,405.5 468.00,404.5 468.25,402.5 468.50,401.5 468.75,399.5 469.00,397.5 469.25,395.5 469.50,392.5 469.75,390.5 470.00,387.5 470.25,383.5 470.50,380.5 470.75,377.5 471.00,373.5 471.25,370.5 471.50,366.5 471.75,363.5 472.00,359.5 472.25,356.5 472.50,353.5 472.75,351.5 473.00,348.5 473.25,345.5 473.50,342.5 473.75,340.5 474.00,337.5 474.25,334.5 474.50,329.5 474.75,323.5 475.00,317.5 475.25,311.5 475.50,305.5 475.75,298.5 476.00,291.5 476.25,284.5 476.50,278.5 476.75,271.5 477.00,264.5 477.25,257.5 477.50,251.5 477.75,246.5 478.00,240.5 478.25,235.5 478.50,230.5 478.75,220.5 479.00,210.5 479.25,200.5 479.40,194.5 479.50,198.5 479.75,208.5 480.00,218.5 480.25,228.5 480.50,234.5 480.75,239.5 481.00,245.5 481.25,250.5 481.50,256.5 481.75,263.5 482.00,269.5 482.25,276.5 482.50,283.5 482.75,290.5 483.00,296.5 483.25,303.5 483.50,310.5 483.75,316.5 484.00,322.5 484.25,328.5 484.50,333.5 484.75,336.5 485.00,339.5 485.25,342.5 485.50,345.5 485.75,347.5 486.00,350.5 486.25,353.5 486.50,356.5 486.75,358.5 487.00,362.5 487.25,365.5 487.50,369.5 487.75,373.5 488.00,376.5 488.25,379.5 488.50,383.5 488.75,386.5 489.00,389.5 489.25,391.5 489.50,394.5 489.75,396.5 490.00,398.5 490.25,400.5 490.50,402.5 490.75,403.5 491.00,404.5 491.25,406.5 491.50,407.5 491.75,408.5 492.00,409.5 492.25,410.5 492.50,411.5 492.75,411.5 493.00,412.5 493.25,413.5 493.50,413.5 493.75,413.5 494.00,414.5 494.25,414.5 494.50,414.5 494.75,415.5 495.00,415.5 495.25,415.5 495.50,415.5 495.75,415.5 496.00,415.5 496.25,415.5 496.50,415.5 496.75,415.5 497.00,415.5 497.25,415.5 497.50,415.5 497.75,415.5 498.00,415.5 498.25,415.5 498.50,415.5 498.75,415.5 499.00,415.5 499.25,415.5 499.50,415.5 499.75,415.5 500.00,415.5 500.25,415.5 500.50,415.5 500.75,415.5 501.00,415.5 501.25,415.5 501.50,415.5 501.75,415.5 502.00,415.5 502.25,415.5 502.50,415.5 502.75,415.5 503.00,415.5 503.25,415.5 503.50,415.5 503.75,415.5 504.00,415.5 504.25,415.5 504.50,415.5 504.75,415.5 505.00,415.5 505.25,415.5 505.50,415.5 505.75,414.5 506.00,414.5 506.25,414.5 506.50,414.5 506.75,413.5 507.00,413.5 507.25,412.5 507.50,412.5 507.75,411.5 508.00,411.5 508.25,410.5 508.50,409.5 508.75,408.5 509.00,407.5 509.25,406.5 509.50,405.5 509.75,403.5 510.00,402.5 510.25,401.5 510.50,399.5 510.75,397.5 511.00,395.5 511.25,393.5 511.50,391.5 511.75,388.5 512.00,385.5 512.25,382.5 512.50,379.5 512.75,375.5 513.00,372.5 513.25,368.5 513.50,365.5 513.75,361.5 514.00,357.5 514.25,354.5 514.50,352.5 514.75,349.5 515.00,346.5 515.25,343.5 515.50,340.5 515.75,338.5 516.00,335.5 516.25,332.5 516.50,329.5 516.75,323.5 517.00,316.5 517.25,310.5 517.50,304.5 517.75,298.5 518.00,291.5 518.25,284.5 518.50,277.5 518.75,270.5 519.00,264.5 519.25,257.5 519.50,250.5 519.75,245.5 520.00,240.5 520.25,234.5 520.50,229.5 520.75,221.5 521.00,211.5 521.25,201.5 521.50,191.5 521.50,191.5 521.75,201.5 522.00,211.5 522.25,221.5 522.50,229.5 522.75,234.5 523.00,240.5 523.25,245.5 523.50,250.5 523.75,257.5 524.00,264.5 524.25,270.5 524.50,277.5 524.75,284.5 525.00,291.5 525.25,298.5 525.50,304.5 525.75,310.5 526.00,316.5 526.25,322.5 526.50,329.5 526.75,332.5 527.00,335.5 527.25,338.5 527.50,340.5 527.75,343.5 528.00,346.5 528.25,349.5 528.50,351.5 528.75,354.5 529.00,357.5 529.25,361.5 529.50,365.5 529.75,368.5 530.00,372.5 530.25,375.5 530.50,379.5 530.75,382.5 531.00,385.5 531.25,388.5 531.50,390.5 531.75,393.5 532.00,395.5 532.25,397.5 532.50,398.5 532.75,400.5 533.00,401.5 533.25,403.5 533.50,404.5 533.75,405.5 534.00,406.5 534.25,407.5 534.50,408.5 534.75,409.5 535.00,410.5 535.25,410.5 535.50,411.5 535.75,411.5 536.00,412.5 536.25,412.5 536.50,412.5 536.75,412.5 537.00,413.5 537.25,413.5 537.50,413.5 537.75,413.5 538.00,413.5 538.25,413.5 538.50,413.5 538.75,413.5 539.00,413.5 539.25,413.5 539.50,413.5 539.75,413.5 540.00,413.5 540.25,413.5 540.50,413.5 540.75,413.5 541.00,413.5 541.25,413.5 541.50,413.5 541.75,413.5 542.00,413.5 542.25,413.5 542.50,413.5 542.75,413.5 543.00,413.5 543.25,413.5 543.50,413.5 543.75,413.5 544.00,413.5 544.25,413.5 544.50,413.5 544.75,413.5 545.00,413.5 545.25,413.5 545.50,413.5 545.75,413.5 546.00,413.5 546.25,413.5 546.50,413.5 546.75,413.5 547.00,413.5 547.25,412.5 547.50,412.5 547.75,412.5 548.00,412.5 548.25,411.5 548.50,411.5 548.75,411.5 549.00,410.5 549.25,410.5 549.50,409.5 549.75,409.5 550.00,408.5 550.25,407.5 550.50,406.5 550.75,405.5 551.00,404.5 551.25,402.5 551.50,401.5 551.75,400.5 552.00,398.5 552.25,396.5 552.50,395.5 552.75,393.5 553.00,391.5 553.25,388.5 553.50,386.5 553.75,383.5 554.00,379.5 554.25,376.5 554.50,373.5 554.75,369.5 555.00,366.5 555.25,362.5 555.50,359.5 555.75,355.5 556.00,351.5 556.25,348.5 556.50,346.5 556.75,343.5 557.00,340.5 557.25,337.5 557.50,334.5 557.75,332.5 558.00,329.5 558.25,326.5 558.50,321.5 558.75,315.5 559.00,309.5 559.25,303.5 559.50,297.5 559.75,290.5 560.00,283.5 560.25,276.5 560.50,270.5 560.75,263.5 561.00,256.5 561.25,249.5 561.50,243.5 561.75,238.5 562.00,232.5 562.25,227.5 562.50,222.5 562.75,212.5 563.00,202.5 563.25,192.5 563.40,186.5 563.50,190.5 563.75,200.5 564.00,210.5 564.25,220.5 564.50,226.5 564.75,231.5 565.00,237.5 565.25,242.5 565.50,248.5 565.75,255.5 566.00,261.5 566.25,268.5 566.50,275.5 566.75,282.5 567.00,288.5 567.25,295.5 567.50,302.5 567.75,308.5 568.00,314.5 568.25,320.5 568.50,325.5 568.75,328.5 569.00,331.5 569.25,334.5 569.50,337.5 569.75,339.5 570.00,342.5 570.25,345.5 570.50,348.5 570.75,350.5 571.00,354.5 571.25,358.5 571.50,361.5 571.75,365.5 572.00,369.5 572.25,372.5 572.50,375.5 572.75,379.5 573.00,382.5 573.25,385.5 573.50,387.5 573.75,390.5 574.00,392.5 574.25,394.5 574.50,395.5 574.75,397.5 575.00,399.5 575.25,400.5 575.50,401.5 575.75,402.5 576.00,403.5 576.25,405.5 576.50,406.5 576.75,406.5 577.00,407.5 577.25,408.5 577.50,408.5 577.75,409.5 578.00,409.5 578.25,410.5 578.50,410.5 578.75,410.5 579.00,410.5 579.25,411.5 579.50,411.5 579.75,411.5 580.00,411.5 580.25,411.5 580.50,411.5 580.75,411.5 581.00,411.5 581.25,411.5 581.50,411.5 581.75,411.5 582.00,411.5 582.25,411.5 582.50,411.5 582.75,411.5 583.00,411.5 583.25,411.5 583.50,411.5 583.75,411.5 584.00,411.5 584.25,411.5 584.50,411.5 584.75,411.5 585.00,411.5 585.25,411.5 585.50,411.5 585.75,411.5 586.00,411.5 586.25,411.5 586.50,411.5 586.75,411.5 587.00,411.5 587.25,411.5 587.50,411.5 587.75,410.5 588.00,410.5 588.25,410.5 588.50,410.5 588.75,410.5 589.00,409.5 589.25,409.5 589.50,408.5 589.75,408.5 590.00,408.5 590.25,407.5 590.50,406.5 590.75,405.5 591.00,404.5 591.25,403.5 591.50,402.5 591.75,401.5 592.00,400.5 592.25,398.5 592.50,397.5 592.75,395.5 593.00,393.5 593.25,392.5 593.50,390.5 593.75,387.5 594.00,385.5 594.25,383.5 594.50,380.5 594.75,377.5 595.00,373.5 595.25,370.5 595.50,367.5 595.75,363.5 596.00,359.5 596.25,356.5 596.50,352.5 596.75,348.5 597.00,344.5 597.25,342.5 597.50,339.5 597.75,336.5 598.00,333.5 598.25,330.5 598.50,328.5 598.75,325.5 599.00,322.5 599.25,319.5 599.50,314.5 599.75,308.5 600.00,302.5 600.25,296.5 600.50,290.5 600.75,283.5 601.00,276.5 601.25,269.5 601.50,263.5 601.75,256.5 602.00,249.5 602.25,242.5 602.50,236.5 602.75,231.5 603.00,225.5 603.25,220.5 603.50,215.5 603.75,205.5 604.00,195.5 604.25,185.5 604.40,179.5 604.50,183.5 604.75,193.5 605.00,203.5 605.25,213.5 605.50,219.5 605.75,224.5 606.00,230.5 606.25,235.5 606.50,241.5 606.75,248.5 607.00,254.5 607.25,261.5 607.50,268.5 607.75,275.5 608.00,281.5 608.25,288.5 608.50,295.5 608.75,301.5 609.00,307.5 609.25,313.5 609.50,318.5 609.75,321.5 610.00,324.5 610.25,327.5 610.50,330.5 610.75,333.5 611.00,335.5 611.25,338.5 611.50,341.5 611.75,344.5 612.00,347.5 612.25,351.5 612.50,355.5 612.75,359.5 613.00,362.5 613.25,366.5 613.50,369.5 613.75,373.5 614.00,376.5 614.25,379.5 614.50,382.5 614.75,384.5 615.00,387.5 615.25,389.5 615.50,391.5 615.75,392.5 616.00,394.5 616.25,396.5 616.50,397.5 616.75,399.5 617.00,400.5 617.25,401.5 617.50,402.5 617.75,403.5 618.00,404.5 618.25,405.5 618.50,406.5 618.75,406.5 619.00,407.5 619.25,407.5 619.50,407.5 619.75,408.5 620.00,408.5 620.25,408.5 620.50,408.5 620.75,409.5 621.00,409.5 621.25,409.5 621.50,409.5 621.75,409.5 622.00,409.5 622.25,409.5 622.50,409.5 622.75,409.5 623.00,409.5 623.25,409.5 623.50,409.5 623.75,409.5 624.00,409.5 624.25,409.5 624.50,409.5 624.75,409.5 625.00,409.5 625.25,409.5 625.50,409.5 625.75,409.5 626.00,409.5 626.25,409.5 626.50,409.5 626.75,409.5 627.00,409.5 627.25,409.5 627.50,409.5 627.75,409.5 628.00,409.5 628.25,409.5 628.50,409.5 628.75,409.5 629.00,409.5 629.25,408.5 629.50,408.5 629.75,408.5 630.00,408.5 630.25,408.5 630.50,408.5 630.75,408.5 631.00,407.5 631.25,407.5 631.50,406.5 631.75,406.5 632.00,406.5 632.25,405.5 632.50,404.5 632.75,404.5 633.00,403.5 633.25,402.5 633.50,401.5 633.75,399.5 634.00,398.5 634.25,397.5 634.50,395.5 634.75,394.5 635.00,392.5 635.25,390.5 635.50,388.5 635.75,386.5 636.00,384.5 636.25,382.5 636.50,379.5 636.75,376.5 637.00,373.5 637.25,369.5 637.50,366.5 637.75,362.5 638.00,359.5 638.25,355.5 638.50,351.5 638.75,347.5 639.00,344.5 639.25,341.5 639.50,339.5 639.75,336.5 640.00,333.5 640.25,330.5 640.50,327.5 640.75,325.5 641.00,322.5 641.25,319.5 641.50,313.5 641.75,307.5 642.00,301.5 642.25,294.5 642.50,288.5 642.75,281.5 643.00,274.5 643.25,268.5 643.50,261.5 643.75,254.5 644.00,247.5 644.25,240.5 644.50,235.5 644.75,230.5 645.00,224.5 645.25,219.5 645.50,212.5 645.75,202.5 646.00,192.5 646.25,182.5 646.30,180.5 646.50,188.5 646.75,198.5 647.00,208.5 647.25,217.5 647.50,222.5 647.75,228.5 648.00,233.5 648.25,238.5 648.50,245.5 648.75,251.5 649.00,258.5 649.25,265.5 649.50,272.5 649.75,278.5 650.00,285.5 650.25,292.5 650.50,298.5 650.75,304.5 651.00,310.5 651.25,316.5 651.50,321.5 651.75,323.5 652.00,326.5 652.25,329.5 652.50,332.5 652.75,335.5 653.00,337.5 653.25,340.5 653.50,343.5 653.75,346.5 654.00,350.5 654.25,353.5 654.50,357.5 654.75,361.5 655.00,364.5 655.25,368.5 655.50,371.5 655.75,374.5 656.00,377.5 656.25,380.5 656.50,383.5 656.75,385.5 657.00,387.5 657.25,389.5 657.50,391.5 657.75,393.5 658.00,394.5 658.25,395.5 658.50,397.5 658.75,398.5 659.00,399.5 659.25,400.5 659.50,401.5 659.75,402.5 660.00,403.5 660.25,403.5 660.50,404.5 660.75,404.5 661.00,405.5 661.25,405.5 661.50,406.5 661.75,406.5 662.00,406.5 662.25,406.5 662.50,406.5 662.75,407.5 663.00,407.5 663.25,407.5 663.50,407.5 663.75,407.5 664.00,407.5 664.25,407.5 664.50,407.5 664.75,407.5 665.00,407.5 665.25,407.5 665.50,407.5 665.75,407.5 666.00,407.5 666.25,407.5 666.50,407.5 666.75,407.5 667.00,407.5 667.25,407.5 667.50,407.5 667.75,407.5 668.00,407.5 668.25,407.5 668.50,407.5 668.75,407.5 669.00,407.5 669.25,407.5 669.50,407.5 669.75,407.5 670.00,407.5 670.25,407.5 670.50,406.5 670.75,406.5 671.00,406.5 671.25,406.5 671.50,406.5 671.75,406.5 672.00,406.5 672.25,406.5 672.50,406.5 672.75,406.5 673.00,406.5 673.25,406.5 673.50,406.5 673.75,405.5 674.00,405.5 674.25,405.5 674.50,404.5 674.75,404.5 675.00,403.5 675.25,403.5 675.50,402.5 675.75,401.5 676.00,400.5 676.25,399.5 676.50,398.5 676.75,397.5 677.00,396.5 677.25,394.5 677.50,393.5 677.75,391.5 678.00,390.5 678.25,388.5 678.50,386.5 678.75,384.5 679.00,382.5 679.25,379.5 679.50,376.5 679.75,373.5 680.00,370.5 680.25,367.5 680.50,363.5 680.75,360.5 681.00,356.5 681.25,353.5 681.50,349.5 681.75,345.5 682.00,341.5 682.25,339.5 682.50,336.5 682.75,333.5 683.00,330.5 683.25,327.5 683.50,325.5 683.75,322.5 684.00,319.5 684.25,316.5 684.50,311.5 684.75,305.5 685.00,299.5 685.25,293.5 685.50,287.5 685.75,280.5 686.00,273.5 686.25,266.5 686.50,260.5 686.75,253.5 687.00,246.5 687.25,239.5 687.50,233.5 687.75,228.5 688.00,222.5 688.25,217.5 688.50,212.5 688.75,202.5 689.00,192.5 689.25,182.5 689.40,176.5 689.50,180.5 689.75,190.5 690.00,200.5 690.25,210.5 690.50,216.5 690.75,221.5 691.00,227.5 691.25,232.5 691.50,238.5 691.75,245.5 692.00,251.5 692.25,258.5 692.50,265.5 692.75,272.5 693.00,278.5 693.25,285.5 693.50,292.5 693.75,298.5 694.00,304.5 694.25,310.5 694.50,315.5 694.75,318.5 695.00,321.5 695.25,324.5 695.50,327.5 695.75,330.5 696.00,332.5 696.25,335.5 696.50,338.5 696.75,341.5 697.00,344.5 697.25,348.5 697.50,352.5 697.75,355.5 698.00,359.5 698.25,363.5 698.50,366.5 698.75,369.5 699.00,373.5 699.25,376.5 699.50,379.5 699.75,381.5 700.00,383.5 700.25,385.5 700.50,387.5 700.75,389.5 701.00,390.5 701.25,392.5 701.50,393.5 701.75,395.5 702.00,396.5 702.25,397.5 702.50,398.5 702.75,399.5 703.00,400.5 703.25,401.5 703.50,401.5 703.75,402.5 704.00,402.5 704.25,403.5 704.50,403.5 704.75,403.5 705.00,404.5 705.25,404.5 705.50,404.5 705.75,404.5 706.00,404.5 706.25,404.5 706.50,404.5 706.75,404.5 707.00,404.5 707.25,404.5 707.50,405.5 707.75,405.5 708.00,405.5 708.25,405.5 708.50,405.5 708.75,405.5 709.00,404.5 709.25,404.5 709.50,404.5 709.75,404.5 710.00,404.5 710.25,404.5 710.50,404.5 710.75,404.5 711.00,404.5 711.25,404.5 711.50,404.5 711.75,404.5 712.00,404.5 712.25,404.5 712.50,404.5 712.75,404.5 713.00,404.5 713.25,404.5 713.50,404.5 713.75,404.5 714.00,404.5 714.25,403.5 714.50,403.5 714.75,403.5 715.00,403.5 715.25,402.5 715.50,402.5 715.75,401.5 716.00,401.5 716.25,400.5 716.50,399.5 716.75,398.5 717.00,397.5 717.25,396.5 717.50,395.5 717.75,393.5 718.00,392.5 718.25,391.5 718.50,389.5 718.75,387.5 719.00,385.5 719.25,384.5 719.50,381.5 719.75,379.5 720.00,377.5 720.25,375.5 720.50,371.5 720.75,368.5 721.00,365.5 721.25,362.5 721.50,358.5 721.75,354.5 722.00,351.5 722.25,347.5 722.50,343.5 722.75,339.5 723.00,335.5 723.25,333.5 723.50,330.5 723.75,327.5 724.00,324.5 724.25,321.5 724.50,319.5 724.75,316.5 725.00,313.5 725.25,310.5 725.50,305.5 725.75,299.5 726.00,293.5 726.25,287.5 726.50,281.5 726.75,274.5 727.00,267.5 727.25,260.5 727.50,254.5 727.75,247.5 728.00,240.5 728.25,233.5 728.50,227.5 728.75,222.5 729.00,216.5 729.25,211.5 729.50,206.5 729.75,196.5 730.00,186.5 730.25,176.5 730.40,170.5 730.50,174.5 730.75,184.5 731.00,194.5 731.25,204.5 731.50,210.5 731.75,215.5 732.00,221.5 732.25,226.5 732.50,232.5 732.75,239.5 733.00,245.5 733.25,252.5 733.50,259.5 733.75,266.5 734.00,272.5 734.25,279.5 734.50,286.5 734.75,292.5 735.00,298.5 735.25,304.5 735.50,310.5 735.75,312.5 736.00,315.5 736.25,318.5 736.50,321.5 736.75,324.5 737.00,327.5 737.25,329.5 737.50,332.5 737.75,335.5 738.00,339.5 738.25,342.5 738.50,346.5 738.75,350.5 739.00,354.5 739.25,357.5 739.50,361.5 739.75,364.5 740.00,367.5 740.25,371.5 740.50,374.5 740.75,376.5 741.00,378.5 741.25,381.5 741.50,383.5 741.75,385.5 742.00,386.5 742.25,388.5 742.50,390.5 742.75,391.5 743.00,392.5 743.25,394.5 743.50,395.5 743.75,396.5 744.00,397.5 744.25,398.5 744.50,399.5 744.75,399.5 745.00,400.5 745.25,400.5 745.50,401.5 745.75,401.5 746.00,401.5 746.25,402.5 746.50,402.5 746.75,402.5 747.00,402.5 747.25,402.5 747.50,402.5 747.75,402.5 748.00,402.5 748.25,402.5 748.50,402.5 748.75,402.5 749.00,402.5 749.25,402.5 749.50,402.5 749.75,402.5 750.00,402.5 750.25,402.5 750.50,402.5 750.75,402.5 751.00,402.5 751.25,402.5 751.50,402.5 751.75,402.5 752.00,402.5 752.25,402.5 752.50,402.5 752.75,402.5 753.00,402.5 753.25,402.5 753.50,402.5 753.75,402.5 754.00,402.5 754.25,402.5 754.50,402.5 754.75,402.5 755.00,402.5 755.25,402.5 755.50,402.5 755.75,402.5 756.00,402.5 756.25,402.5 756.50,402.5 756.75,402.5 757.00,402.5 757.25,401.5 757.50,401.5 757.75,401.5 758.00,401.5 758.25,401.5 758.50,400.5 758.75,400.5 759.00,399.5 759.25,399.5 759.50,398.5 759.75,397.5 760.00,397.5 760.25,396.5 760.50,395.5 760.75,393.5 761.00,392.5 761.25,391.5 761.50,389.5 761.75,387.5 762.00,386.5 762.25,384.5 762.50,382.5 762.75,380.5 763.00,378.5 763.25,376.5 763.50,373.5 763.75,371.5 764.00,368.5 764.25,365.5 764.50,361.5 764.75,358.5 765.00,354.5 765.25,351.5 765.50,347.5 765.75,343.5 766.00,340.5 766.25,336.5 766.50,332.5 766.75,328.5 767.00,325.5 767.25,323.5 767.50,320.5 767.75,317.5 768.00,314.5 768.25,311.5 768.50,308.5 768.75,305.5 769.00,303.5 769.25,297.5 769.50,291.5 769.75,285.5 770.00,279.5 770.25,272.5 770.50,265.5 770.75,259.5 771.00,252.5 771.25,245.5 771.50,238.5 771.75,232.5 772.00,225.5 772.25,219.5 772.50,214.5 772.75,208.5 773.00,203.5 773.25,197.5 773.50,187.5 773.75,177.5 774.00,167.5 774.10,163.5 774.25,169.5 774.50,179.5 774.75,189.5 775.00,199.5 775.25,204.5 775.50,209.5 775.75,215.5 776.00,220.5 776.25,226.5 776.50,233.5 776.75,240.5 777.00,247.5 777.25,253.5 777.50,260.5 777.75,267.5 778.00,274.5 778.25,280.5 778.50,286.5 778.75,292.5 779.00,298.5 779.25,303.5 779.50,306.5 779.75,309.5 780.00,312.5 780.25,315.5 780.50,317.5 780.75,320.5 781.00,323.5 781.25,326.5 781.50,329.5 781.75,333.5 782.00,336.5 782.25,340.5 782.50,344.5 782.75,348.5 783.00,351.5 783.25,355.5 783.50,359.5 783.75,362.5 784.00,365.5 784.25,368.5 784.50,371.5 784.75,373.5 785.00,376.5 785.25,378.5 785.50,380.5 785.75,382.5 786.00,384.5 786.25,385.5 786.50,387.5 786.75,388.5 787.00,390.5 787.25,391.5 787.50,393.5 787.75,394.5 788.00,395.5 788.25,396.5 788.50,396.5 788.75,397.5 789.00,397.5 789.25,398.5 789.50,398.5 789.75,399.5 790.00,399.5 790.25,399.5 790.50,400.5 790.75,400.5 791.00,400.5 791.25,400.5 791.50,400.5 791.75,400.5 792.00,400.5 792.25,400.5 792.50,400.5 792.75,400.5 793.00,400.5 793.25,400.5 793.50,400.5 793.75,400.5 794.00,400.5 794.25,400.5 794.50,400.5 794.75,400.5 795.00,400.5 795.25,400.5 795.50,400.5 795.75,400.5 796.00,400.5 796.25,400.5 796.50,400.5 796.75,400.5 797.00,400.5 797.25,400.5 797.50,400.5 797.75,400.5 798.00,400.5 798.25,400.5 798.50,400.5 798.75,400.5 799.00,399.5 799.25,399.5 799.50,399.5 799.75,399.5 800.00,399.5 800.25,399.5 800.50,398.5 800.75,398.5 801.00,397.5 801.25,397.5 801.50,396.5 801.75,396.5 802.00,395.5 802.25,394.5 802.50,393.5 802.75,392.5 803.00,391.5 803.25,389.5 803.50,388.5 803.75,386.5 804.00,384.5 804.25,383.5 804.50,381.5 804.75,379.5 805.00,377.5 805.25,375.5 805.50,372.5 805.75,370.5 806.00,368.5 806.25,365.5 806.50,361.5 806.75,358.5 807.00,354.5 807.25,351.5 807.50,347.5 807.75,343.5 808.00,340.5 808.25,336.5 808.50,332.5 808.75,328.5 809.00,325.5 809.25,322.5 809.50,319.5 809.75,316.5 810.00,313.5 810.25,310.5 810.50,308.5 810.75,305.5 811.00,302.5 811.25,299.5 811.50,293.5 811.75,287.5 812.00,281.5 812.25,274.5 812.50,268.5 812.75,261.5 813.00,254.5 813.25,248.5 813.50,241.5 813.75,234.5 814.00,227.5 814.25,220.5 814.50,215.5 814.75,210.5 815.00,204.5 815.25,199.5 815.50,192.5 815.75,182.5 816.00,172.5 816.25,162.5 816.30,160.5 816.50,168.5 816.75,178.5 817.00,188.5 817.25,197.5 817.50,202.5 817.75,208.5 818.00,213.5 818.25,218.5 818.50,225.5 818.75,231.5 819.00,238.5 819.25,245.5 819.50,252.5 819.75,258.5 820.00,265.5 820.25,272.5 820.50,278.5 820.75,284.5 821.00,290.5 821.25,297.5 821.50,301.5 821.75,304.5 822.00,306.5 822.25,309.5 822.50,312.5 822.75,315.5 823.00,318.5 823.25,321.5 823.50,323.5 823.75,326.5 824.00,330.5 824.25,334.5 824.50,338.5 824.75,342.5 825.00,346.5 825.25,349.5 825.50,353.5 825.75,356.5 826.00,360.5 826.25,363.5 826.50,366.5 826.75,369.5 827.00,371.5 827.25,373.5 827.50,376.5 827.75,378.5 828.00,380.5 828.25,381.5 828.50,383.5 828.75,385.5 829.00,386.5 829.25,388.5 829.50,389.5 829.75,390.5 830.00,392.5 830.25,392.5 830.50,393.5 830.75,394.5 831.00,395.5 831.25,395.5 831.50,396.5 831.75,396.5 832.00,397.5 832.25,397.5 832.50,397.5 832.75,397.5 833.00,397.5 833.25,398.5 833.50,398.5 833.75,398.5 834.00,398.5 834.25,398.5 834.50,398.5 834.75,398.5 835.00,398.5 835.25,398.5 835.50,398.5 835.75,398.5 836.00,398.5 836.25,398.5 836.50,398.5 836.75,398.5 837.00,398.5 837.25,398.5 837.50,398.5 837.75,398.5 838.00,398.5 838.25,398.5 838.50,398.5 838.75,398.5 839.00,398.5 839.25,398.5 839.50,398.5 839.75,397.5 840.00,397.5 840.25,397.5 840.50,397.5 840.75,397.5 841.00,397.5 841.25,397.5 841.50,396.5 841.75,396.5 842.00,396.5 842.25,395.5 842.50,395.5 842.75,394.5 843.00,393.5 843.25,393.5 843.50,392.5 843.75,391.5 844.00,390.5 844.25,389.5 844.50,387.5 844.75,386.5 845.00,384.5 845.25,382.5 845.50,381.5 845.75,379.5 846.00,377.5 846.25,375.5 846.50,373.5 846.75,371.5 847.00,368.5 847.25,366.5 847.50,363.5 847.75,359.5 848.00,356.5 848.25,353.5 848.50,349.5 848.75,345.5 849.00,342.5 849.25,338.5 849.50,334.5 849.75,330.5 850.00,326.5 850.25,323.5 850.50,320.5 850.75,317.5 851.00,315.5 851.25,312.5 851.50,309.5 851.75,306.5 852.00,303.5 852.25,300.5 852.50,297.5 852.75,291.5 853.00,285.5 853.25,278.5 853.50,272.5 853.75,266.5 854.00,259.5 854.25,252.5 854.50,245.5 854.75,238.5 855.00,232.5 855.25,225.5 855.50,218.5 855.75,213.5 856.00,208.5 856.25,202.5 856.50,197.5 856.75,189.5 857.00,179.5 857.25,169.5 857.50,159.5 857.50,159.5 857.75,169.5 858.00,179.5 858.25,189.5 858.50,197.5 858.75,202.5 859.00,208.5 859.25,213.5 859.50,218.5 859.75,225.5 860.00,232.5 860.25,238.5 860.50,245.5 860.75,252.5 861.00,259.5 861.25,266.5 861.50,272.5 861.75,278.5 862.00,285.5 862.25,291.5 862.50,297.5 862.75,300.5 863.00,303.5 863.25,306.5 863.50,309.5 863.75,312.5 864.00,315.5 864.25,317.5 864.50,320.5 864.75,323.5 865.00,326.5 865.25,330.5 865.50,334.5 865.75,338.5 866.00,342.5 866.25,345.5 866.50,349.5 866.75,352.5 867.00,356.5 867.25,359.5 867.50,363.5 867.75,366.5 868.00,368.5 868.25,370.5 868.50,373.5 868.75,375.5 869.00,377.5 869.25,379.5 869.50,380.5 869.75,382.5 870.00,383.5 870.25,385.5 870.50,387.5 870.75,388.5 871.00,389.5 871.25,390.5 871.50,391.5 871.75,392.5 872.00,393.5 872.25,393.5 872.50,394.5 872.75,394.5 873.00,395.5 873.25,395.5 873.50,395.5 873.75,395.5 874.00,396.5 874.25,396.5 874.50,396.5 874.75,396.5 875.00,396.5 875.25,396.5 875.50,396.5 875.75,396.5 876.00,396.5 876.25,396.5 876.50,396.5 876.75,396.5 877.00,396.5 877.25,396.5 877.50,396.5 877.75,396.5 878.00,396.5 878.25,396.5 878.50,396.5 878.75,396.5 879.00,396.5 879.25,396.5 879.50,396.5 879.75,396.5 880.00,396.5 880.25,396.5 880.50,396.5 880.75,396.5 881.00,396.5 881.25,396.5 881.50,396.5 881.75,396.5 882.00,396.5 882.25,396.5 882.50,396.5 882.75,396.5 883.00,396.5 883.25,396.5 883.50,396.5 883.75,396.5 884.00,396.5 884.25,396.5 884.50,396.5 884.75,396.5 885.00,396.5 885.25,396.5 885.50,396.5 885.75,396.5 886.00,396.5 886.25,396.5 886.50,396.5 886.75,396.5 887.00,396.5 887.25,396.5 887.50,396.5 887.75,396.5 888.00,396.5 888.25,396.5 888.50,396.5 888.75,396.5 889.00,396.5 889.25,396.5 889.50,396.5 889.75,396.5 890.00,396.5 890.25,396.5 890.50,396.5 890.75,396.5 891.00,396.5 891.25,396.5 891.50,396.5 891.75,396.5 892.00,396.5 892.25,396.5 892.50,396.5 892.75,396.5 893.00,396.5 893.25,396.5 893.50,396.5 893.75,396.5 894.00,396.5 894.25,396.5 894.50,396.5 894.75,396.5 895.00,396.5 895.25,396.5 895.50,396.5 895.75,396.5 896.00,396.5 896.25,396.5 896.50,396.5 896.75,396.5 897.00,396.5 897.25,396.5 897.50,396.5 897.75,396.5 898.00,396.5 898.25,396.5 898.50,396.5 898.75,396.5 899.00,396.5 899.25,396.5 899.50,396.5 899.75,396.5 900.00,396.5 900.25,396.5 900.50,396.5 900.75,396.5 901.00,396.5 901.25,396.5 901.50,396.5 901.75,396.5 902.00,396.5 902.25,396.5 902.50,396.5 902.75,396.5 903.00,396.5 903.25,396.5 903.50,396.5 903.75,396.5 904.00,396.5 904.25,396.5 904.50,396.5 904.75,396.5 905.00,396.5 905.25,395.5 905.50,395.5 905.75,395.5 906.00,395.5 906.25,395.5 906.50,395.5 906.75,395.5 907.00,395.5 907.25,395.5 907.50,395.5 907.75,395.5 908.00,395.5 908.25,395.5 908.50,395.5 908.75,395.5 909.00,395.5 909.25,395.5 909.50,395.5 909.75,395.5 910.00,395.5 910.25,395.5 910.50,395.5 910.75,395.5 911.00,395.5 911.25,395.5 911.50,395.5 911.75,395.5 912.00,395.5 912.25,395.5 912.50,395.5 912.75,395.5 913.00,395.5 913.25,395.5 913.50,395.5 913.75,395.5 914.00,395.5 914.25,395.5 914.50,395.5 914.75,395.5 915.00,395.5 915.25,395.5 915.50,395.5 915.75,395.5 916.00,395.5 916.25,395.5 916.50,395.5 916.75,395.5 917.00,395.5 917.25,395.5 917.50,395.5 917.75,395.5 918.00,395.5 918.25,395.5 918.50,395.5 918.75,395.5 919.00,395.5 919.25,395.5 919.50,395.5 919.75,395.5 920.00,395.5 920.25,395.5 920.50,395.5 920.75,395.5 921.00,395.5 921.25,395.5 921.50,395.5 921.75,395.5 922.00,395.5 922.25,395.5 922.50,395.5 922.75,395.5 923.00,395.5 923.25,395.5 923.50,395.5 923.75,395.5 924.00,395.5 924.25,395.5 924.50,395.5 924.75,395.5 925.00,395.5 925.25,395.5 925.50,395.5 925.75,395.5 926.00,395.5 926.25,395.5 926.50,395.5 926.75,395.5 927.00,395.5 927.25,395.5 927.50,395.5 927.75,395.5 928.00,395.5 928.25,395.5 928.50,395.5 928.75,395.5 929.00,395.5 929.25,395.5 929.50,395.5 929.75,395.5 930.00,395.5 930.25,395.5 930.50,395.5 930.75,395.5 931.00,395.5 931.25,395.5 931.50,395.5 931.75,395.5 932.00,395.5 932.25,395.5 932.50,395.5 932.75,395.5 933.00,395.5 933.25,395.5 933.50,395.5 933.75,395.5 934.00,395.5 934.25,395.5 934.50,395.5 934.75,395.5 935.00,394.5 935.25,394.5 935.50,394.5 935.75,394.5 936.00,394.5 936.25,394.5 936.50,394.5 936.75,394.5 937.00,394.5 937.25,394.5 937.50,394.5 937.75,394.5 938.00,394.5 938.25,394.5 938.50,394.5 938.75,394.5 939.00,394.5 939.25,394.5 939.50,394.5 939.75,394.5 940.00,394.5 940.25,394.5 940.50,394.5 940.75,394.5 941.00,394.5 941.25,394.5 941.50,394.5 941.75,394.5 942.00,394.5 942.25,394.5 942.50,394.5 942.75,394.5 943.00,394.5 943.25,394.5 943.50,394.5 943.75,394.5 944.00,394.5 944.25,394.5 944.50,394.5 944.75,394.5 945.00,394.5 945.25,394.5 945.50,394.5 945.75,394.5 946.00,394.5 946.25,394.5 946.50,394.5 946.75,394.5 947.00,394.5 947.25,394.5 947.50,394.5 947.75,394.5 948.00,394.5 948.25,394.5 948.50,394.5 948.75,394.5 949.00,394.5 949.25,394.5 949.50,394.5 949.75,394.5 950.00,394.5 950.25,394.5 950.50,394.5 950.75,394.5 951.00,394.5 951.25,394.5 951.50,394.5 951.75,394.5 952.00,394.5 952.25,394.5 952.50,394.5 952.75,394.5 953.00,394.5 953.25,394.5 953.50,394.5 953.75,394.5 954.00,394.5 954.25,394.5 954.50,394.5 954.75,394.5 955.00,394.5 955.25,394.5 955.50,394.5 955.75,394.5 956.00,394.5 956.25,394.5 956.50,394.5 956.75,394.5 957.00,394.5 957.25,394.5 957.50,394.5 957.75,394.5 958.00,394.5 958.25,394.5 958.50,394.5 958.75,394.5 959.00,394.5 959.25,394.5 959.50,394.5 959.75,394.5 960.00,394.5 960.25,394.5 960.50,394.5 960.75,394.5 961.00,394.5 961.25,394.5 961.50,394.5 961.75,394.5 962.00,394.5 962.25,394.5 962.50,394.5 962.75,394.5 963.00,394.5 963.25,394.5 963.50,394.5 963.75,394.5 964.00,394.5 964.25,394.5 964.50,394.5 964.75,394.5 965.00,393.5 965.25,393.5 965.50,393.5 965.75,393.5 966.00,393.5 966.25,393.5 966.50,393.5 966.75,393.5 967.00,393.5 967.25,393.5 967.50,393.5 967.75,393.5 968.00,393.5 968.25,393.5 968.50,393.5 968.75,393.5 969.00,393.5 969.25,393.5 969.50,393.5 969.75,393.5 970.00,393.5 970.25,393.5 970.50,393.5 970.75,393.5 971.00,393.5 971.25,393.5 971.50,393.5 971.75,393.5 972.00,393.5 972.25,393.5 972.50,393.5 972.75,393.5 973.00,393.5 973.25,393.5 973.50,393.5 973.75,393.5 974.00,393.5 974.25,393.5 974.50,393.5 974.75,393.5 975.00,393.5 975.25,393.5 975.50,393.5 975.75,393.5 976.00,393.5 976.25,393.5 976.50,393.5 976.75,393.5 977.00,393.5 977.25,393.5 977.50,393.5 977.75,393.5 978.00,393.5 978.25,393.5 978.50,393.5 978.75,393.5 979.00,393.5 979.25,393.5 979.50,393.5 979.75,393.5 980.00,393.5 980.25,393.5 980.50,393.5 980.75,393.5 981.00,393.5 981.25,393.5 981.50,393.5 981.75,393.5 982.00,393.5 982.25,393.5 982.50,393.5 982.75,393.5 983.00,393.5 983.25,393.5 983.50,393.5 983.75,393.5 984.00,393.5 984.25,393.5 984.50,393.5 984.75,393.5 985.00,393.5 985.25,393.5 985.50,393.5 985.75,393.5 986.00,393.5 986.25,393.5 986.50,393.5 986.75,393.5 987.00,393.5 987.25,393.5 987.50,393.5 987.75,393.5 988.00,393.5 988.25,393.5 988.50,393.5 988.75,393.5 989.00,393.5 989.25,393.5 989.50,393.5 989.75,393.5 990.00,393.5 990.25,393.5 990.50,393.5 990.75,393.5 991.00,393.5 991.25,393.5 991.50,393.5 991.75,393.5 992.00,393.5 992.25,393.5 992.50,393.5 992.75,393.5 993.00,393.5 993.25,393.5 993.50,393.5 993.75,393.5 994.00,393.5 994.25,393.5 994.50,393.5 994.75,393.5 995.00,393.5 995.25,393.5 995.50,393.5 995.75,393.5 996.00,393.5 996.25,393.5 996.50,393.5 996.75,393.5 997.00,393.5 997.25,393.5 997.50,393.5 997.75,393.5 998.00,393.5 998.25,393.5 998.50,393.5 998.75,393.5 999.00,393.5 999.25,393.5 999.50,393.5 999.75,393.5 1000.00,393.5 1000.25,393.5 1000.50,393.5 1000.75,393.5 1001.00,393.5 1001.25,393.5 1001.50,393.5 1001.75,393.5 1002.00,393.5 1002.25,393.5 1002.50,393.5 1002.75,393.5 1003.00,393.5 1003.25,393.5 1003.50,393.5 1003.75,393.5 1004.00,392.5 1004.25,392.5 1004.50,392.5 1004.75,392.5 1005.00,392.5 1005.25,392.5 1005.50,392.5 1005.75,392.5 1006.00,392.5 1006.25,392.5 1006.50,392.5 1006.75,392.5 1007.00,392.5 1007.25,392.5 1007.50,392.5 1007.75,392.5 1008.00,392.5 1008.25,392.5 1008.50,392.5 1008.75,392.5 1009.00,392.5 1009.25,392.5 1009.50,392.5 1009.75,392.5 1010.00,392.5 1010.25,392.5 1010.50,392.5 1010.75,392.5 1011.00,392.5 1011.25,392.5 1011.50,392.5 1011.75,392.5 1012.00,392.5 1012.25,392.5 1012.50,392.5 1012.75,392.5 1013.00,392.5 1013.25,392.5 1013.50,392.5 1013.75,392.5 1014.00,392.5 1014.25,392.5 1014.50,392.5 1014.75,392.5 1015.00,392.5 1015.25,392.5 1015.50,392.5 1015.75,392.5 1016.00,392.5 1016.25,392.5 1016.50,392.5 1016.75,392.5 1017.00,392.5 1017.25,392.5 1017.50,392.5 1017.75,392.5 1018.00,392.5 1018.25,392.5 1018.50,392.5 1018.75,392.5 1019.00,392.5 1019.25,392.5 1019.50,392.5 1019.75,392.5 1020.00,392.5 1020.25,392.5 1020.50,392.5 1020.75,392.5 1021.00,392.5 1021.25,392.5 1021.50,392.5 1021.75,392.5 1022.00,392.5 1022.25,392.5 1022.50,392.5 1022.75,392.5 1023.00,392.5 1023.25,392.5 1023.50,392.5 1023.75,392.5 1024.00,392.5 1024.25,392.5 1024.50,392.5 1024.75,392.5 1025.00,392.5 1025.25,392.5 1025.50,392.5 1025.75,392.5 1026.00,392.5 1026.25,392.5 1026.50,392.5 1026.75,392.5 1027.00,392.5 1027.25,392.5 1027.50,392.5 1027.75,392.5 1028.00,392.5 1028.25,392.5 1028.50,392.5 1028.75,392.5 1029.00,392.5 1029.25,392.5 1029.50,392.5 1029.75,392.5 1030.00,392.5 1030.25,392.5 1030.50,392.5 1030.75,392.5 1031.00,392.5 1031.25,392.5 1031.50,392.5 1031.75,392.5 1032.00,392.5 1032.25,392.5 1032.50,392.5 1032.75,392.5 1033.00,392.5 1033.25,392.5 1033.50,392.5 1033.75,392.5 1034.00,392.5 1034.25,392.5 1034.50,392.5 1034.75,392.5 1035.00,392.5 1035.25,392.5 1035.50,392.5 1035.75,392.5 1036.00,392.5 1036.25,392.5 1036.50,392.5 1036.75,392.5 1037.00,392.5 1037.25,392.5 1037.50,392.5 1037.75,392.5 1038.00,392.5 1038.25,392.5 1038.50,392.5 1038.75,392.5 1039.00,392.5 1039.25,392.5 1039.50,392.5 1039.75,392.5 1040.00,392.5 1040.25,392.5 1040.50,392.5 1040.75,392.5 1041.00,392.5 1041.25,392.5 1041.50,392.5 1041.75,392.5 1042.00,392.5 1042.25,392.5 1042.50,392.5 1042.75,392.5 1043.00,392.5 1043.25,392.5 1043.50,392.5 1043.75,392.5 1044.00,392.5 1044.25,392.5 1044.50,392.5 1044.75,392.5 1045.00,392.5 1045.25,392.5 1045.50,392.5 1045.75,392.5 1046.00,392.5 1046.25,392.5 1046.50,392.5 1046.75,392.5 1047.00,392.5 1047.25,392.5 1047.50,392.5 1047.75,392.5 1048.00,392.5 1048.25,392.5 1048.50,392.5 1048.75,392.5 1049.00,392.5 1049.25,392.5 1049.50,392.5 1049.75,392.5 1050.00,392.5 1050.25,392.5 1050.50,392.5 1050.75,392.5 1051.00,392.5 1051.25,392.5 1051.50,392.5 1051.75,392.5 1052.00,392.5 1052.25,392.5 1052.50,392.5 1052.75,392.5 1053.00,392.5 1053.25,392.5 1053.50,392.5 1053.75,392.5 1054.00,392.5 1054.25,392.5 1054.50,392.5 1054.75,392.5 1055.00,392.5 1055.25,392.5 1055.50,392.5 1055.75,392.5 1056.00,392.5 1056.25,392.5 1056.50,392.5 1056.75,392.5 1057.00,392.5 1057.25,392.5 1057.50,392.5 1057.75,392.5 1058.00,392.5 1058.25,392.5 1058.50,392.5 1058.75,392.5 1059.00,392.5 1059.25,392.5 1059.50,392.5 1059.75,392.5 1060.00,392.5 1060.25,392.5 1060.50,392.5 1060.75,392.5 1061.00,392.5 1061.25,392.5 1061.50,392.5 1061.75,392.5 1062.00,392.5 1062.25,392.5 1062.50,392.5 1062.75,392.5 1063.00,392.5 1063.25,392.5 1063.50,392.5 1063.75,392.5 1064.00,392.5 1064.25,392.5 1064.50,392.5 1064.75,392.5 1065.00,392.5 1065.25,392.5 1065.50,392.5 1065.75,392.5 1066.00,392.5 1066.25,392.5 1066.50,392.5 1066.75,392.5 1067.00,392.5 1067.25,392.5 1067.50,392.5 1067.75,392.5 1068.00,392.5 1068.25,392.5 1068.50,392.5 1068.75,392.5 1069.00,392.5 1069.25,392.5 1069.50,392.5 1069.75,392.5 1070.00,392.5 1070.25,392.5 1070.50,392.5 1070.75,392.5 1071.00,392.5 1071.25,392.5 1071.50,392.5 1071.75,392.5 1072.00,392.5 1072.25,392.5 1072.50,392.5 1072.75,392.5 1073.00,392.5 1073.25,392.5 1073.50,392.5 1073.75,392.5 1074.00,392.5 1074.25,392.5 1074.50,392.5 1074.75,392.5 1075.00,392.5 1075.25,392.5 1075.50,392.5 1075.75,392.5 1076.00,392.5 1076.25,392.5 1076.50,392.5 1076.75,392.5 1077.00,392.5 1077.25,392.5 1077.50,392.5 1077.75,392.5 1078.00,392.5 1078.25,392.5 1078.50,392.5 1078.75,392.5 1079.00,392.5 1079.25,392.5 1079.50,392.5 1079.75,392.5 1080.00,392.5 1080.25,392.5 1080.50,392.5 1080.75,392.5 1081.00,392.5 1081.25,392.5 1081.50,392.5 1081.75,392.5 1082.00,392.5 1082.25,392.5 1082.50,392.5 1082.75,392.5 1083.00,392.5 1083.25,392.5 1083.50,392.5 1083.75,392.5 1084.00,392.5 1084.25,392.5 1084.50,392.5 1084.75,392.5 1085.00,392.5 1085.25,392.5 1085.50,392.5 1085.75,392.5 1086.00,392.5 1086.25,392.5 1086.50,392.5 1086.75,392.5 1087.00,392.5 1087.25,392.5 1087.50,392.5 1087.75,392.5 1088.00,392.5 1088.25,392.5 1088.50,392.5 1088.75,392.5 1089.00,392.5 1089.25,392.5 1089.50,392.5 1089.75,392.5 1090.00,392.5 1090.25,392.5 1090.50,392.5 1090.75,392.5 1091.00,392.5 1091.25,392.5 1091.50,392.5 1091.75,392.5 1092.00,392.5 1092.25,392.5 1092.50,392.5 1092.75,392.5 1093.00,392.5 1093.25,392.5 1093.50,392.5 1093.75,392.5 1094.00,392.5 1094.25,392.5 1094.50,392.5 1094.75,392.5 1095.00,392.5 1095.25,392.5 1095.50,392.5 1095.75,392.5 1096.00,392.5 1096.25,392.5 1096.50,392.5 1096.75,392.5 1097.00,392.5 1097.25,392.5 1097.50,392.5 1097.75,392.5 1098.00,392.5 1098.25,392.5 1098.50,392.5 1098.75,392.5 1099.00,392.5 1099.25,392.5 1099.50,392.5 1099.75,392.5 1100.00,392.5"/>
<g fill="#dacf14" shape-rendering="crispEdges">
<rect x="228" y="227" width="2" height="34"/>
<rect x="269" y="219" width="2" height="34"/>
<rect x="311" y="213" width="2" height="34"/>
<rect x="353" y="206" width="2" height="34"/>
<rect x="395" y="203" width="2" height="34"/>
<rect x="437" y="197" width="2" height="34"/>
<rect x="478" y="194" width="2" height="34"/>
<rect x="521" y="191" width="2" height="34"/>
<rect x="562" y="186" width="2" height="34"/>
<rect x="603" y="179" width="2" height="34"/>
<rect x="645" y="180" width="2" height="34"/>
<rect x="688" y="176" width="2" height="34"/>
<rect x="729" y="170" width="2" height="34"/>
<rect x="773" y="163" width="2" height="34"/>
<rect x="815" y="160" width="2" height="34"/>
<rect x="857" y="159" width="2" height="34"/>
</g>
<g fill="none" stroke="#e30606" stroke-width="1.2">
<path d="M225.00 219.50 h8.8 l-4.4 6.4 z"/>
<path d="M265.20 211.50 h8.8 l-4.4 6.4 z"/>
<path d="M307.50 205.50 h8.8 l-4.4 6.4 z"/>
<path d="M349.10 198.50 h8.8 l-4.4 6.4 z"/>
<path d="M391.90 195.50 h8.8 l-4.4 6.4 z"/>
<path d="M434.00 189.50 h8.8 l-4.4 6.4 z"/>
<path d="M475.00 186.50 h8.8 l-4.4 6.4 z"/>
<path d="M517.10 183.50 h8.8 l-4.4 6.4 z"/>
<path d="M559.00 178.50 h8.8 l-4.4 6.4 z"/>
<path d="M600.00 171.50 h8.8 l-4.4 6.4 z"/>
<path d="M641.90 172.50 h8.8 l-4.4 6.4 z"/>
<path d="M685.00 168.50 h8.8 l-4.4 6.4 z"/>
<path d="M726.00 162.50 h8.8 l-4.4 6.4 z"/>
<path d="M769.70 155.50 h8.8 l-4.4 6.4 z"/>
<path d="M811.90 152.50 h8.8 l-4.4 6.4 z"/>
<path d="M853.10 151.50 h8.8 l-4.4 6.4 z"/>
</g>
<g fill="none" stroke="#e30606" stroke-width="1.15">
<path d="M227.00 435.42 l2.4 -4 l2.4 4 z"/>
<path d="M267.20 432.42 l2.4 -4 l2.4 4 z"/>
<path d="M309.50 430.42 l2.4 -4 l2.4 4 z"/>
<path d="M351.10 428.42 l2.4 -4 l2.4 4 z"/>
<path d="M393.90 426.42 l2.4 -4 l2.4 4 z"/>
<path d="M436.00 424.42 l2.4 -4 l2.4 4 z"/>
<path d="M477.00 422.42 l2.4 -4 l2.4 4 z"/>
<path d="M519.10 420.42 l2.4 -4 l2.4 4 z"/>
<path d="M561.00 418.42 l2.4 -4 l2.4 4 z"/>
<path d="M602.00 416.42 l2.4 -4 l2.4 4 z"/>
<path d="M643.90 414.42 l2.4 -4 l2.4 4 z"/>
<path d="M687.00 412.42 l2.4 -4 l2.4 4 z"/>
<path d="M728.00 409.42 l2.4 -4 l2.4 4 z"/>
<path d="M771.70 407.42 l2.4 -4 l2.4 4 z"/>
<path d="M813.90 405.42 l2.4 -4 l2.4 4 z"/>
<path d="M855.10 403.42 l2.4 -4 l2.4 4 z"/>
</g>
<g fill="#f01010" font-size="14.5">
<text x="222.0" y="218.0" textLength="13.6" lengthAdjust="spacingAndGlyphs">01</text>
<text x="262.2" y="210.0" textLength="13.6" lengthAdjust="spacingAndGlyphs">02</text>
<text x="304.5" y="204.0" textLength="13.6" lengthAdjust="spacingAndGlyphs">03</text>
<text x="346.1" y="197.0" textLength="13.6" lengthAdjust="spacingAndGlyphs">04</text>
<text x="388.9" y="194.0" textLength="13.6" lengthAdjust="spacingAndGlyphs">05</text>
<text x="431.0" y="188.0" textLength="13.6" lengthAdjust="spacingAndGlyphs">06</text>
<text x="472.0" y="185.0" textLength="13.6" lengthAdjust="spacingAndGlyphs">07</text>
<text x="514.1" y="182.0" textLength="13.6" lengthAdjust="spacingAndGlyphs">08</text>
<text x="556.0" y="177.0" textLength="13.6" lengthAdjust="spacingAndGlyphs">09</text>
<text x="597.0" y="170.0" textLength="13.6" lengthAdjust="spacingAndGlyphs">10</text>
<text x="638.9" y="171.0" textLength="13.6" lengthAdjust="spacingAndGlyphs">11</text>
<text x="682.0" y="167.0" textLength="13.6" lengthAdjust="spacingAndGlyphs">12</text>
<text x="723.0" y="161.0" textLength="13.6" lengthAdjust="spacingAndGlyphs">13</text>
<text x="766.7" y="154.0" textLength="13.6" lengthAdjust="spacingAndGlyphs">14</text>
<text x="808.9" y="151.0" textLength="13.6" lengthAdjust="spacingAndGlyphs">15</text>
<text x="850.1" y="150.0" textLength="13.6" lengthAdjust="spacingAndGlyphs">16</text>
</g>
<rect x="55.5" y="57.5" width="1045" height="514" fill="none" stroke="#ffffff" stroke-width="1.25"/>
</svg>
<div class="ax axl" style="top:58px">24.7</div>
<div class="ax axl" style="top:157px">4.7</div>
<div class="ax axl" style="top:170px">dBm</div>
<div class="ax axl" style="top:256px"><span class="m">-</span>15.3</div>
<div class="ax axl" style="top:355px"><span class="m">-</span>35.3</div>
<div class="ax axl" style="top:454px"><span class="m">-</span>55.3</div>
<div class="ax axl" style="top:555px"><span class="m">-</span>75.3</div>
<div class="ax axl" style="top:507px;width:54px">10.0</div>
<div class="ax axl" style="top:525px;width:54px">dB/DIV</div>
<div class="ax axr" style="top:58px">10.0</div>
<div class="ax axr" style="top:157px"><span class="m">-</span>10.0</div>
<div class="ax axr" style="top:170px">dB</div>
<div class="ax axr" style="top:256px"><span class="m">-</span>30.0</div>
<div class="ax axr" style="top:355px"><span class="m">-</span>50.0</div>
<div class="ax axr" style="top:454px"><span class="m">-</span>70.0</div>
<div class="ax axr" style="top:555px"><span class="m">-</span>90.0</div>
<div class="ax ref" style="left:57px;top:154px">REF</div>
<div class="ax ref" style="left:1048px;width:50px;text-align:right;transform-origin:right center;top:154px">REF</div>
<div class="ax axx" style="left:32px;top:576px">1542.000nm</div>
<div class="ax axx" style="left:554px;top:576px">1552.000nm</div>
<div class="ax axx" style="left:1076px;top:576px">1562.000nm</div>
<div style="position:absolute;left:9px;top:615px;width:85px;height:3px;background:#d4c411"></div>
<div class="bd" style="left:9px;width:21px;background:#d4c411"><span>A</span></div>
<div class="lg" style="left:30px;color:#e6da10;transform:scaleX(.9)">F.Fix<b>DSP</b></div>
<div class="bd" style="left:121px;width:23px;background:#1ea7d0"><span>B</span></div>
<div class="lg" style="left:145.5px;color:#1ea7d0">Fix <b>BLK</b></div>
<div class="bd" style="left:227px;width:23px;background:#b45cff"><span>C</span></div>
<div class="lg" style="left:251.5px;color:#b45cff">Fix <b>BLK</b></div>
<div class="bd" style="left:332px;width:24px;background:#0b8a0b"><span>D</span></div>
<div class="lg" style="left:357px;color:#0b8a0b">Fix <b>BLK</b></div>
<div class="bd" style="left:438px;width:22px;background:#5a64ff"><span>E</span></div>
<div class="lg" style="left:461.5px;color:#5a64ff">Fix <b>BLK</b></div>
<div class="bd" style="left:543px;width:21px;background:#12cf8a"><span>F</span></div>
<div class="lg" style="left:565.5px;color:#12cf8a">Fix <b>BLK</b></div>
<div class="bd" style="left:646px;width:24px;background:#e07018"><span>G</span></div>
<div class="lg" style="left:671px;color:#e07018">Fix <b>BLK</b></div>
<div class="st" style="left:868px;width:90px"><span>ZOOMING</span></div>
<div class="st" style="left:968px;width:90px"><span>2X SPEED</span></div>
<div class="st" style="left:1068px;width:80px"><span>ANGLED</span></div>
<div class="hl" style="top:618px"></div>
<div class="hl" style="top:653px"></div>
<div class="t" style="left:318px;top:628px;font-size:20.8px;color:#ddd216">波长:</div>
<div class="t" style="left:698px;top:628px;font-size:20.8px;color:#ddd216">功率:</div>
<div class="t s" style="left:9px;top:656px">S.Level:30.00dB</div>
<div class="t s" style="left:294px;top:656px">Fit BW: AUTO</div>
<div class="t s" style="left:579px;top:656px">Mask BW:*****</div>
<div class="t s" style="left:951px;top:656px">PageCount&nbsp; <span style="letter-spacing:.9px">1/4</span></div>
<div class="c hd" style="left:108px;top:677px">No.</div>
<div class="c hd" style="left:260px;top:677px">Wavelength/nm</div>
<div class="c hd" style="left:414px;top:677px">Level/dBm</div>
<div class="c hd" style="left:567px;top:677px">Offset WL/nm</div>
<div class="c hd" style="left:722px;top:677px">Offset Lvl/dB</div>
<div class="c hd" style="left:875px;top:677px">Noise Lvl/dBm</div>
<div class="c hd" style="left:1030px;top:677px">SNR/dB</div>
<div class="c" style="left:108px;top:697px">1</div>
<div class="c" style="left:260px;top:697px">1545.3303</div>
<div class="c" style="left:414px;top:697px"><span class="m">-</span>8.492</div>
<div class="c" style="left:567px;top:697px"><span class="m">-</span>12.030</div>
<div class="c" style="left:722px;top:697px"><span class="m">-</span>13.240</div>
<div class="c" style="left:875px;top:697px"><span class="m">-</span>40.001</div>
<div class="c" style="left:1030px;top:697px">31.510</div>
<div class="c" style="left:108px;top:717px">2</div>
<div class="c" style="left:260px;top:717px">1546.1044</div>
<div class="c" style="left:414px;top:717px"><span class="m">-</span>6.910</div>
<div class="c" style="left:567px;top:717px"><span class="m">-</span>11.256</div>
<div class="c" style="left:722px;top:717px"><span class="m">-</span>11.659</div>
<div class="c" style="left:875px;top:717px"><span class="m">-</span>39.560</div>
<div class="c" style="left:1030px;top:717px">32.649</div>
<div class="c" style="left:108px;top:737px">3</div>
<div class="c" style="left:260px;top:737px">1546.9185</div>
<div class="c" style="left:414px;top:737px"><span class="m">-</span>5.722</div>
<div class="c" style="left:567px;top:737px"><span class="m">-</span>10.442</div>
<div class="c" style="left:722px;top:737px"><span class="m">-</span>10.471</div>
<div class="c" style="left:875px;top:737px"><span class="m">-</span>39.156</div>
<div class="c" style="left:1030px;top:737px">33.434</div>
<div class="c" style="left:108px;top:757px">4</div>
<div class="c" style="left:260px;top:757px">1547.7042</div>
<div class="c" style="left:414px;top:757px"><span class="m">-</span>4.376</div>
<div class="c" style="left:567px;top:757px"><span class="m">-</span>9.657</div>
<div class="c" style="left:722px;top:757px"><span class="m">-</span>9.125</div>
<div class="c" style="left:875px;top:757px"><span class="m">-</span>38.714</div>
<div class="c" style="left:1030px;top:757px">34.338</div>
<div class="c" style="left:108px;top:777px">5</div>
<div class="c" style="left:260px;top:777px">1548.5264</div>
<div class="c" style="left:414px;top:777px"><span class="m">-</span>3.773</div>
<div class="c" style="left:567px;top:777px"><span class="m">-</span>8.834</div>
<div class="c" style="left:722px;top:777px"><span class="m">-</span>8.522</div>
<div class="c" style="left:875px;top:777px"><span class="m">-</span>38.305</div>
<div class="c" style="left:1030px;top:777px">34.532</div>
<div class="btn first"><span>2023-10-07<br>15:08</span></div>
<div class="btn" style="top:75px">参数设置</div>
<div class="btn" style="top:165px"></div>
<div class="btn" style="top:255px"></div>
<div class="btn" style="top:345px"></div>
<div class="btn" style="top:435px"></div>
<div class="btn" style="top:525px"></div>
<div class="btn" style="top:615px"></div>
<div class="btn" style="top:705px">返回</div>
</body></html>
